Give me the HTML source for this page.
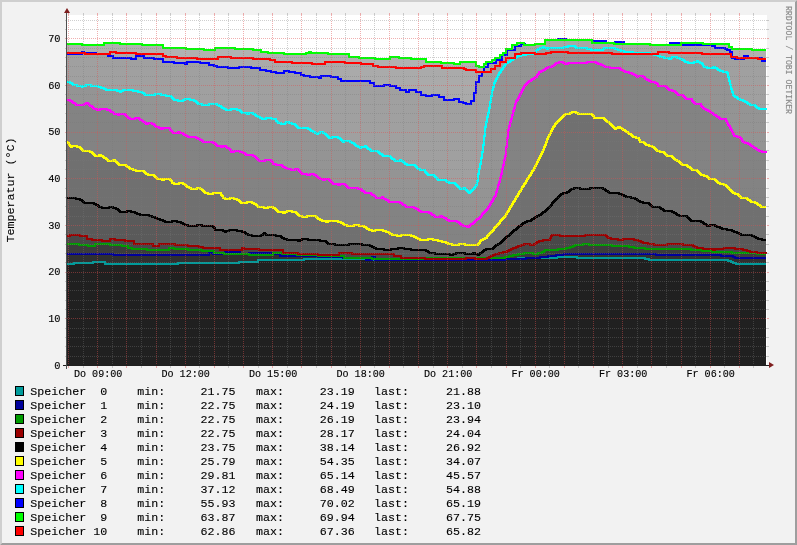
<!DOCTYPE html><html><head><meta charset="utf-8"><style>html,body{margin:0;padding:0;background:#f2f2f2;}svg{display:block;will-change:transform;}text{font-family:"Liberation Mono",monospace;stroke:#000;stroke-width:0.12px;}</style></head><body>
<svg width="797" height="545" viewBox="0 0 797 545">
<rect x="0" y="0" width="797" height="545" fill="#f2f2f2"/>
<polygon points="0,0 797,0 795,2 2,2 2,543 0,545" fill="#cfcfcf"/>
<polygon points="797,0 797,545 0,545 2,543 795,543 795,2" fill="#9e9e9e"/>
<rect x="67" y="15" width="700" height="350" fill="#ffffff"/>
<polygon points="67,365 67,44 82,44 82,45 104,45 104,43 120,43 120,44 142,44 142,45 163,45 163,48 186,48 186,49 204,49 204,50 215,50 215,48 235,48 235,49 253,49 253,50 261,50 261,52 268,52 268,53 284,53 284,54 306,54 306,53 309,53 309,52 311,52 311,53 328,53 328,54 349,54 349,57 359,57 359,58 375,58 375,59 390,59 390,57 399,57 399,58 411,58 411,59 426,59 426,62 441,62 441,63 454,63 454,64 460,64 460,62 476,62 476,66 479,66 479,67 484,67 484,64 486,64 486,62 492,62 492,60 495,60 495,58 500,58 500,55 503,55 503,53 506,53 506,49 512,49 512,45 517,45 517,43 524,43 524,45 535,45 535,44 545,44 545,40 592,40 592,43 614,43 614,44 650,44 650,45 681,45 681,43 703,43 703,44 729,44 729,47 732,47 732,49 752,49 752,50 766,50 766,365" fill="#000" fill-opacity="0.306"/>
<polygon points="67,365 67,53 85,53 85,54 110,54 110,52 116,52 116,53 136,53 136,54 163,54 163,56 166,56 166,57 177,57 177,58 197,58 197,59 218,59 218,57 231,57 231,58 253,58 253,59 270,59 270,60 275,60 275,62 292,62 292,63 312,63 312,64 325,64 325,62 345,62 345,63 361,63 361,64 373,64 373,66 378,66 378,67 396,67 396,68 421,68 421,67 424,67 424,66 442,66 442,68 464,68 464,69 466,69 466,70 476,70 476,72 491,72 491,69 495,69 495,66 500,66 500,62 506,62 506,58 515,58 515,54 521,54 521,53 535,53 535,54 546,54 546,53 551,53 551,52 568,52 568,53 612,53 612,54 658,54 658,52 669,52 669,53 702,53 702,54 731,54 731,57 737,57 737,58 758,58 758,59 766,59 766,365" fill="#000" fill-opacity="0.034"/>
<polygon points="67,365 67,54 82,54 82,52 84,52 84,53 96,53 96,54 108,54 108,56 113,56 113,58 131,58 131,59 136,59 136,56 144,56 144,58 154,58 154,59 163,59 163,62 174,62 174,63 185,63 185,64 187,64 187,62 200,62 200,63 209,63 209,65 214,65 214,66 217,66 217,67 228,67 228,68 239,68 239,67 251,67 251,68 260,68 260,70 266,70 266,71 271,71 271,72 276,72 276,73 284,73 284,71 289,71 289,72 295,72 295,73 301,73 301,75 304,75 304,76 310,76 310,77 319,77 319,78 321,78 321,76 331,76 331,77 338,77 338,79 341,79 341,81 370,81 370,83 374,83 374,86 384,86 384,85 390,85 390,86 396,86 396,88 400,88 400,90 406,90 406,92 409,92 409,90 416,90 416,92 421,92 421,95 426,95 426,96 432,96 432,95 439,95 439,97 444,97 444,100 454,100 454,99 459,99 459,102 463,102 463,103 466,103 466,104 471,104 471,101 474,101 474,93 476,93 476,82 479,82 479,76 482,76 482,72 484,72 484,67 488,67 488,63 496,63 496,60 502,60 502,55 507,55 507,50 515,50 515,46 521,46 521,44 525,44 525,45 535,45 535,44 545,44 545,40 558,40 558,39 566,39 566,40 592,40 592,41 606,41 606,43 615,43 615,42 624,42 624,44 650,44 650,45 670,45 670,43 680,43 680,45 712,45 712,46 715,46 715,48 725,48 725,49 727,49 727,50 730,50 730,52 732,52 732,58 735,58 735,59 744,59 744,56 748,56 748,58 762,58 762,61 766,61 766,365" fill="#000" fill-opacity="0.053"/>
<polygon points="67,365 67,82 68,82 69,82 70,82 70,83 71,83 72,83 72,84 73,84 73,85 74,85 75,85 76,85 77,85 77,86 78,86 79,86 80,86 81,86 82,86 82,87 83,87 83,86 84,86 85,86 86,86 86,85 87,85 88,85 89,85 90,85 91,85 91,86 92,86 93,86 94,86 95,86 96,86 97,86 98,86 98,87 99,87 100,87 101,87 101,88 102,88 103,88 104,88 104,89 105,89 106,89 106,90 107,90 108,90 109,90 110,90 111,90 112,90 113,90 114,90 115,90 116,90 117,90 117,91 118,91 119,91 120,91 120,92 121,92 121,91 122,91 123,91 123,90 124,90 125,90 126,90 127,90 128,90 129,90 130,90 131,90 132,90 133,90 133,91 134,91 135,91 136,91 137,91 138,91 138,92 139,92 140,92 141,92 142,92 142,93 143,93 144,93 144,94 145,94 145,95 146,95 147,95 148,95 149,95 150,95 151,95 152,95 153,95 154,95 155,95 155,94 156,94 157,94 158,94 159,94 160,94 161,94 161,95 162,95 163,95 164,95 165,95 166,95 166,96 167,96 168,96 169,96 170,96 171,96 171,97 172,97 172,98 173,98 173,99 174,99 174,100 175,100 176,100 177,100 178,100 178,101 179,101 180,101 181,101 182,101 183,101 183,100 184,100 185,100 185,99 186,99 187,99 188,99 189,99 190,99 190,100 191,100 192,100 193,100 194,100 194,101 195,101 196,101 196,102 197,102 197,103 198,103 198,104 199,104 200,104 201,104 202,104 202,105 203,105 204,105 205,105 206,105 207,105 208,105 209,105 209,104 210,104 211,104 212,104 213,104 214,104 215,104 216,104 217,104 217,105 218,105 219,105 219,106 220,106 221,106 221,107 222,107 222,108 223,108 224,108 224,109 225,109 226,109 226,110 227,110 228,110 229,110 230,110 231,110 231,109 232,109 233,109 234,109 235,109 236,109 237,109 237,110 238,110 239,110 240,110 240,111 241,111 241,112 242,112 242,113 243,113 244,113 245,113 246,113 247,113 247,114 248,114 249,114 249,113 250,113 251,113 252,113 253,113 253,114 254,114 255,114 255,115 256,115 256,116 257,116 258,116 258,117 259,117 260,117 260,118 261,118 262,118 262,119 263,119 264,119 265,119 266,119 266,118 267,118 268,118 269,118 270,118 271,118 272,118 272,119 273,119 274,119 275,119 276,119 276,121 277,121 277,122 278,122 278,123 279,123 280,123 281,123 281,124 282,124 283,124 284,124 285,124 285,123 286,123 286,122 287,122 288,122 289,122 289,123 290,123 291,123 292,123 292,124 293,124 294,124 295,124 295,125 296,125 296,126 297,126 297,127 298,127 298,128 299,128 300,128 301,128 302,128 303,128 304,128 305,128 306,128 307,128 308,128 308,129 309,129 310,129 310,130 311,130 311,131 312,131 313,131 313,132 314,132 315,132 315,133 316,133 317,133 317,134 318,134 318,133 319,133 320,133 320,132 321,132 322,132 323,132 323,133 324,133 325,133 325,134 326,134 326,135 327,135 327,136 328,136 328,137 329,137 329,138 330,138 331,138 332,138 332,137 333,137 334,137 335,137 336,137 337,137 338,137 338,138 339,138 340,138 340,139 341,139 341,140 342,140 342,141 343,141 343,142 344,142 344,141 345,141 346,141 347,141 348,141 349,141 350,141 350,142 351,142 352,142 352,143 353,143 354,143 354,144 355,144 355,145 356,145 356,146 357,146 358,146 358,147 359,147 360,147 360,148 361,148 361,147 362,147 363,147 364,147 365,147 365,146 366,146 366,147 367,147 367,148 368,148 368,149 369,149 370,149 370,150 371,150 371,151 372,151 373,151 374,151 375,151 376,151 377,151 378,151 378,152 379,152 379,153 380,153 380,154 381,154 382,154 382,155 383,155 383,156 384,156 385,156 386,156 387,156 388,156 389,156 390,156 390,157 391,157 391,158 392,158 392,159 393,159 394,159 394,160 395,160 395,161 396,161 397,161 398,161 399,161 400,161 400,160 401,160 401,161 402,161 403,161 403,162 404,162 404,163 405,163 405,164 406,164 407,164 407,165 408,165 409,165 410,165 411,165 412,165 413,165 414,165 415,165 415,166 416,166 416,167 417,167 417,168 418,168 418,169 419,169 420,169 420,170 421,170 422,170 423,170 424,170 425,170 425,172 426,172 426,173 427,173 427,174 428,174 428,175 429,175 430,175 431,175 432,175 433,175 434,175 434,176 435,176 435,177 436,177 436,178 437,178 437,179 438,179 438,180 439,180 440,180 441,180 442,180 443,180 444,180 445,180 446,180 446,181 447,181 447,182 448,182 449,182 449,183 450,183 451,183 452,183 453,183 454,183 455,183 455,184 456,184 456,185 457,185 457,186 458,186 458,187 459,187 459,188 460,188 460,189 461,189 462,189 463,189 463,188 464,188 465,188 465,189 466,189 466,190 467,190 467,191 468,191 468,192 469,192 469,193 470,193 470,192 471,192 471,191 472,191 472,190 473,190 473,189 474,189 474,188 475,188 475,187 476,187 476,185 477,185 477,181 478,181 478,174 479,174 479,169 480,169 480,164 481,164 481,158 482,158 482,152 483,152 483,145 484,145 484,136 485,136 485,127 486,127 486,122 487,122 487,117 488,117 488,113 489,113 489,108 490,108 490,102 491,102 491,96 492,96 492,90 493,90 493,87 494,87 494,83 495,83 495,81 496,81 496,79 497,79 497,77 498,77 498,75 499,75 499,73 500,73 500,72 501,72 501,70 502,70 502,69 503,69 503,67 504,67 504,66 505,66 505,65 506,65 506,63 507,63 508,63 508,62 509,62 510,62 510,61 511,61 511,60 512,60 513,60 513,59 514,59 514,58 515,58 516,58 516,57 517,57 518,57 518,56 519,56 520,56 521,56 521,55 522,55 523,55 524,55 525,55 526,55 526,54 527,54 528,54 529,54 530,54 531,54 532,54 533,54 534,54 535,54 536,54 536,50 537,50 538,50 538,49 539,49 540,49 540,48 541,48 542,48 543,48 543,47 544,47 544,48 545,48 546,48 547,48 547,49 548,49 548,48 549,48 550,48 551,48 552,48 553,48 554,48 555,48 556,48 557,48 558,48 559,48 560,48 561,48 562,48 563,48 564,48 564,47 565,47 566,47 567,47 568,47 568,46 569,46 570,46 571,46 572,46 573,46 574,46 575,46 575,47 576,47 576,48 577,48 578,48 579,48 580,48 581,48 582,48 583,48 584,48 585,48 586,48 587,48 587,49 588,49 589,49 590,49 591,49 591,50 592,50 593,50 594,50 595,50 596,50 597,50 598,50 599,50 600,50 601,50 602,50 603,50 603,49 604,49 604,48 605,48 606,48 607,48 608,48 609,48 610,48 611,48 612,48 613,48 614,48 615,48 615,49 616,49 617,49 618,49 618,50 619,50 620,50 621,50 621,51 622,51 623,51 624,51 624,52 625,52 626,52 627,52 628,52 629,52 630,52 631,52 632,52 633,52 633,53 634,53 635,53 636,53 637,53 638,53 639,53 640,53 641,53 642,53 643,53 644,53 645,53 646,53 647,53 648,53 649,53 650,53 650,54 651,54 652,54 653,54 654,54 654,55 655,55 656,55 657,55 658,55 658,56 659,56 660,56 660,57 661,57 662,57 663,57 664,57 664,58 665,58 666,58 667,58 668,58 669,58 669,59 670,59 671,59 671,58 672,58 672,57 673,57 674,57 675,57 676,57 677,57 677,58 678,58 679,58 680,58 680,59 681,59 682,59 682,60 683,60 684,60 684,61 685,61 685,62 686,62 687,62 688,62 688,63 689,63 690,63 691,63 692,63 693,63 694,63 694,62 695,62 696,62 697,62 697,61 698,61 698,62 699,62 700,62 700,63 701,63 702,63 702,64 703,64 703,66 704,66 704,67 705,67 706,67 707,67 707,68 708,68 709,68 710,68 711,68 712,68 713,68 713,67 714,67 715,67 715,68 716,68 717,68 717,69 718,69 718,70 719,70 720,70 720,71 721,71 722,71 723,71 723,72 724,72 725,72 726,72 727,72 727,73 728,73 728,77 729,77 729,81 730,81 730,85 731,85 731,89 732,89 732,92 733,92 733,95 734,95 734,96 735,96 735,97 736,97 737,97 737,98 738,98 738,99 739,99 740,99 740,100 741,100 742,100 743,100 743,101 744,101 745,101 745,102 746,102 747,102 747,103 748,103 748,104 749,104 750,104 750,105 751,105 752,105 753,105 754,105 755,105 755,106 756,106 756,107 757,107 757,108 758,108 759,108 759,109 760,109 761,109 762,109 763,109 764,109 765,109 766,109 766,110 766,110 766,365" fill="#000" fill-opacity="0.074"/>
<polygon points="67,365 67,100 68,100 69,100 70,100 70,101 71,101 72,101 72,102 73,102 73,103 74,103 75,103 75,104 76,104 76,105 77,105 78,105 79,105 80,105 81,105 82,105 83,105 84,105 84,104 85,104 86,104 86,103 87,103 88,103 88,104 89,104 89,105 90,105 90,106 91,106 92,106 92,107 93,107 93,108 94,108 94,109 95,109 96,109 97,109 97,110 98,110 99,110 100,110 100,109 101,109 102,109 103,109 104,109 105,109 106,109 107,109 107,110 108,110 109,110 110,110 110,111 111,111 111,112 112,112 113,112 113,113 114,113 114,114 115,114 116,114 117,114 118,114 118,115 119,115 119,114 120,114 121,114 122,114 123,114 124,114 125,114 125,115 126,115 126,116 127,116 127,117 128,117 128,118 129,118 130,118 130,119 131,119 132,119 133,119 134,119 135,119 135,118 136,118 137,118 138,118 139,118 139,119 140,119 140,120 141,120 142,120 142,121 143,121 143,122 144,122 145,122 145,123 146,123 146,124 147,124 148,124 148,123 149,123 150,123 151,123 152,123 152,124 153,124 154,124 154,125 155,125 155,126 156,126 156,127 157,127 158,127 159,127 159,128 160,128 161,128 161,129 162,129 163,129 163,128 164,128 165,128 166,128 167,128 168,128 169,128 170,128 170,130 171,130 171,131 172,131 172,132 173,132 173,133 174,133 175,133 176,133 177,133 178,133 178,132 179,132 180,132 180,133 181,133 182,133 183,133 183,134 184,134 184,135 185,135 186,135 186,136 187,136 188,136 188,137 189,137 190,137 191,137 192,137 193,137 194,137 195,137 196,137 196,138 197,138 198,138 198,139 199,139 200,139 200,140 201,140 202,140 202,141 203,141 203,142 204,142 205,142 206,142 207,142 208,142 209,142 210,142 211,142 212,142 213,142 213,143 214,143 215,143 215,144 216,144 216,145 217,145 217,146 218,146 219,146 220,146 221,146 221,147 222,147 223,147 223,146 224,146 225,146 226,146 226,147 227,147 227,148 228,148 229,148 229,149 230,149 230,150 231,150 231,152 232,152 233,152 234,152 234,151 235,151 236,151 237,151 238,151 239,151 240,151 240,152 241,152 242,152 243,152 243,153 244,153 245,153 245,154 246,154 246,155 247,155 248,155 249,155 250,155 251,155 252,155 253,155 253,156 254,156 255,156 255,157 256,157 256,158 257,158 257,159 258,159 258,160 259,160 259,161 260,161 261,161 262,161 263,161 264,161 265,161 265,160 266,160 267,160 268,160 269,160 270,160 271,160 271,161 272,161 272,162 273,162 273,164 274,164 275,164 276,164 276,165 277,165 278,165 279,165 280,165 281,165 282,165 282,166 283,166 283,167 284,167 285,167 285,168 286,168 287,168 287,169 288,169 289,169 290,169 291,169 291,170 292,170 293,170 294,170 295,170 295,169 296,169 297,169 298,169 298,170 299,170 299,171 300,171 300,172 301,172 301,173 302,173 302,174 303,174 304,174 305,174 306,174 307,174 307,175 308,175 309,175 310,175 310,174 311,174 312,174 313,174 314,174 314,175 315,175 316,175 316,176 317,176 317,177 318,177 318,178 319,178 320,178 320,179 321,179 322,179 323,179 323,180 324,180 325,180 325,179 326,179 327,179 328,179 329,179 329,180 330,180 330,181 331,181 331,182 332,182 332,183 333,183 333,184 334,184 335,184 336,184 337,184 338,184 338,185 339,185 340,185 340,184 341,184 342,184 343,184 344,184 345,184 345,185 346,185 346,186 347,186 347,187 348,187 348,188 349,188 350,188 351,188 352,188 353,188 354,188 355,188 356,188 357,188 358,188 358,189 359,189 360,189 361,189 361,190 362,190 362,191 363,191 364,191 364,192 365,192 365,193 366,193 367,193 368,193 369,193 370,193 371,193 371,194 372,194 372,195 373,195 374,195 374,196 375,196 375,197 376,197 376,198 377,198 378,198 379,198 380,198 381,198 382,198 382,197 383,197 383,198 384,198 384,199 385,199 386,199 386,200 387,200 388,200 388,201 389,201 389,202 390,202 391,202 392,202 393,202 394,202 395,202 396,202 397,202 398,202 399,202 400,202 400,203 401,203 402,203 402,204 403,204 403,205 404,205 405,205 405,206 406,206 406,207 407,207 408,207 409,207 410,207 411,207 412,207 413,207 414,207 414,208 415,208 416,208 416,209 417,209 418,209 418,210 419,210 419,211 420,211 421,211 421,212 422,212 423,212 424,212 425,212 426,212 427,212 428,212 429,212 429,213 430,213 431,213 431,214 432,214 432,215 433,215 434,215 434,216 435,216 435,217 436,217 437,217 438,217 439,217 440,217 440,216 441,216 442,216 442,217 443,217 444,217 444,218 445,218 446,218 446,219 447,219 447,220 448,220 449,220 449,221 450,221 451,221 452,221 453,221 454,221 455,221 456,221 457,221 457,222 458,222 459,222 459,223 460,223 460,224 461,224 461,225 462,225 463,225 463,226 464,226 465,226 466,226 467,226 467,227 468,227 469,227 469,226 470,226 470,225 471,225 471,224 472,224 473,224 473,223 474,223 474,222 475,222 475,221 476,221 476,220 477,220 477,219 478,219 479,219 479,218 480,218 480,217 481,217 481,216 482,216 482,214 483,214 483,213 484,213 484,212 485,212 485,211 486,211 486,210 487,210 487,209 488,209 488,207 489,207 489,206 490,206 490,204 491,204 491,202 492,202 492,201 493,201 493,199 494,199 494,197 495,197 495,196 496,196 496,192 497,192 497,189 498,189 498,185 499,185 499,182 500,182 500,178 501,178 501,174 502,174 502,169 503,169 503,165 504,165 504,160 505,160 505,156 506,156 506,147 507,147 507,138 508,138 508,130 509,130 509,126 510,126 510,122 511,122 511,119 512,119 512,115 513,115 513,111 514,111 514,108 515,108 515,104 516,104 516,101 517,101 517,100 518,100 518,98 519,98 519,96 520,96 520,94 521,94 521,92 522,92 522,90 523,90 523,88 524,88 524,86 525,86 525,85 526,85 526,84 527,84 527,83 528,83 528,82 529,82 529,81 530,81 531,81 531,80 532,80 532,79 533,79 534,79 534,78 535,78 535,77 536,77 537,77 537,75 538,75 538,74 539,74 539,72 540,72 541,72 541,71 542,71 543,71 543,70 544,70 545,70 545,69 546,69 546,68 547,68 548,68 548,67 549,67 550,67 551,67 552,67 552,66 553,66 554,66 554,65 555,65 555,64 556,64 556,63 557,63 558,63 559,63 559,62 560,62 561,62 562,62 563,62 563,63 564,63 565,63 565,64 566,64 567,64 568,64 568,63 569,63 570,63 571,63 572,63 573,63 574,63 575,63 576,63 577,63 578,63 579,63 580,63 581,63 582,63 583,63 584,63 585,63 586,63 587,63 587,62 588,62 589,62 590,62 591,62 592,62 593,62 594,62 595,62 596,62 596,63 597,63 598,63 598,64 599,64 600,64 601,64 601,65 602,65 603,65 603,66 604,66 605,66 605,67 606,67 607,67 608,67 609,67 610,67 610,68 611,68 612,68 613,68 614,68 615,68 616,68 617,68 618,68 619,68 620,68 620,69 621,69 621,70 622,70 623,70 623,71 624,71 625,71 625,72 626,72 627,72 628,72 629,72 629,73 630,73 631,73 632,73 632,74 633,74 634,74 634,75 635,75 636,75 636,76 637,76 637,77 638,77 638,76 639,76 640,76 641,76 642,76 643,76 643,77 644,77 645,77 645,79 646,79 647,79 647,80 648,80 649,80 649,81 650,81 651,81 651,82 652,82 653,82 654,82 655,82 655,83 656,83 657,83 657,84 658,84 658,86 659,86 660,86 661,86 662,86 663,86 664,86 665,86 666,86 666,87 667,87 667,88 668,88 668,89 669,89 669,90 670,90 671,90 672,90 672,91 673,91 674,91 675,91 675,92 676,92 676,93 677,93 677,94 678,94 678,95 679,95 680,95 681,95 682,95 683,95 683,96 684,96 684,97 685,97 685,98 686,98 686,99 687,99 688,99 689,99 690,99 691,99 692,99 692,101 693,101 693,102 694,102 694,103 695,103 695,104 696,104 697,104 698,104 699,104 700,104 701,104 701,106 702,106 702,107 703,107 703,108 704,108 704,109 705,109 706,109 706,110 707,110 708,110 708,111 709,111 710,111 710,112 711,112 711,113 712,113 713,113 713,114 714,114 714,115 715,115 716,115 716,116 717,116 717,117 718,117 719,117 719,118 720,118 720,119 721,119 722,119 723,119 724,119 725,119 726,119 726,121 727,121 727,123 728,123 728,125 729,125 729,126 730,126 730,128 731,128 731,130 732,130 732,132 733,132 733,134 734,134 734,136 735,136 736,136 737,136 737,137 738,137 739,137 740,137 740,138 741,138 741,139 742,139 742,141 743,141 743,142 744,142 745,142 745,143 746,143 747,143 748,143 748,144 749,144 750,144 750,145 751,145 751,146 752,146 753,146 753,147 754,147 754,148 755,148 756,148 756,149 757,149 757,150 758,150 759,150 759,151 760,151 761,151 762,151 762,152 763,152 764,152 765,152 766,152 766,153 766,153 766,365" fill="#000" fill-opacity="0.113"/>
<polygon points="67,365 67,142 68,142 68,143 69,143 69,145 70,145 70,146 71,146 71,147 72,147 72,146 73,146 74,146 75,146 76,146 77,146 77,147 78,147 79,147 80,147 80,148 81,148 81,149 82,149 82,150 83,150 83,151 84,151 85,151 86,151 87,151 88,151 89,151 90,151 90,152 91,152 92,152 92,153 93,153 93,154 94,154 94,155 95,155 95,156 96,156 97,156 98,156 99,156 99,155 100,155 101,155 101,156 102,156 103,156 103,157 104,157 104,158 105,158 106,158 106,159 107,159 107,160 108,160 108,161 109,161 110,161 111,161 112,161 113,161 113,160 114,160 115,160 115,161 116,161 116,162 117,162 117,163 118,163 118,164 119,164 119,165 120,165 121,165 122,165 123,165 124,165 125,165 126,165 126,166 127,166 127,167 128,167 129,167 129,168 130,168 130,169 131,169 132,169 133,169 133,170 134,170 135,170 136,170 136,171 137,171 138,171 139,171 140,171 141,171 142,171 143,171 144,171 144,172 145,172 145,173 146,173 146,174 147,174 148,174 148,175 149,175 150,175 151,175 152,175 153,175 154,175 154,176 155,176 155,177 156,177 156,178 157,178 157,179 158,179 159,179 160,179 161,179 162,179 162,180 163,180 164,180 164,179 165,179 166,179 167,179 168,179 169,179 170,179 170,180 171,180 171,181 172,181 172,183 173,183 174,183 174,184 175,184 176,184 177,184 178,184 179,184 179,183 180,183 181,183 182,183 183,183 183,184 184,184 185,184 185,185 186,185 186,186 187,186 187,187 188,187 189,187 189,188 190,188 191,188 191,189 192,189 193,189 194,189 195,189 196,189 197,189 197,188 198,188 199,188 200,188 200,189 201,189 202,189 202,190 203,190 203,191 204,191 204,192 205,192 205,193 206,193 207,193 208,193 208,194 209,194 210,194 211,194 212,194 213,194 213,193 214,193 215,193 216,193 217,193 218,193 219,193 220,193 221,193 221,195 222,195 222,196 223,196 223,198 224,198 225,198 225,199 226,199 227,199 228,199 229,199 230,199 230,198 231,198 232,198 233,198 234,198 234,199 235,199 236,199 237,199 237,200 238,200 239,200 239,201 240,201 240,202 241,202 241,203 242,203 243,203 244,203 245,203 246,203 247,203 247,202 248,202 249,202 250,202 251,202 252,202 252,203 253,203 254,203 254,204 255,204 256,204 256,205 257,205 257,206 258,206 258,207 259,207 260,207 261,207 262,207 263,207 264,207 264,208 265,208 266,208 267,208 268,208 268,207 269,207 270,207 271,207 272,207 273,207 273,208 274,208 275,208 275,209 276,209 276,210 277,210 277,211 278,211 278,212 279,212 280,212 281,212 282,212 283,212 283,213 284,213 285,213 285,212 286,212 287,212 287,211 288,211 289,211 290,211 291,211 292,211 292,212 293,212 294,212 295,212 296,212 296,213 297,213 297,214 298,214 298,215 299,215 299,216 300,216 301,216 302,216 302,217 303,217 304,217 305,217 306,217 307,217 307,216 308,216 309,216 310,216 311,216 312,216 313,216 314,216 315,216 316,216 316,217 317,217 317,218 318,218 318,219 319,219 320,219 320,220 321,220 322,220 322,221 323,221 324,221 325,221 326,221 326,222 327,222 328,222 328,221 329,221 330,221 331,221 332,221 333,221 334,221 335,221 336,221 337,221 338,221 338,222 339,222 340,222 341,222 341,223 342,223 343,223 343,224 344,224 344,225 345,225 346,225 347,225 347,226 348,226 349,226 350,226 351,226 352,226 353,226 354,226 354,225 355,225 356,225 357,225 358,225 359,225 359,226 360,226 361,226 362,226 363,226 364,226 364,227 365,227 366,227 366,228 367,228 367,229 368,229 369,229 369,230 370,230 371,230 372,230 372,231 373,231 374,231 375,231 375,230 376,230 377,230 378,230 379,230 380,230 381,230 382,230 383,230 383,231 384,231 385,231 386,231 386,232 387,232 388,232 389,232 389,233 390,233 390,234 391,234 392,234 392,235 393,235 394,235 395,235 396,235 397,235 397,236 398,236 399,236 400,236 401,236 401,235 402,235 403,235 404,235 405,235 406,235 407,235 408,235 409,235 410,235 411,235 411,236 412,236 413,236 414,236 414,237 415,237 416,237 416,238 417,238 418,238 418,239 419,239 420,239 420,240 421,240 422,240 423,240 424,240 425,240 426,240 427,240 428,240 428,239 429,239 430,239 431,239 432,239 433,239 433,240 434,240 435,240 436,240 437,240 438,240 438,241 439,241 440,241 441,241 442,241 442,242 443,242 444,242 445,242 446,242 446,243 447,243 448,243 448,244 449,244 450,244 451,244 452,244 452,245 453,245 454,245 455,245 456,245 457,245 458,245 459,245 459,244 460,244 461,244 462,244 463,244 464,244 465,244 465,245 466,245 467,245 468,245 469,245 470,245 471,245 472,245 473,245 474,245 475,245 476,245 477,245 478,245 478,244 479,244 479,243 480,243 480,241 481,241 481,240 482,240 483,240 483,239 484,239 485,239 485,238 486,238 487,238 487,236 488,236 488,235 489,235 489,234 490,234 490,233 491,233 491,232 492,232 492,231 493,231 493,230 494,230 494,228 495,228 495,227 496,227 496,226 497,226 497,225 498,225 498,224 499,224 499,223 500,223 500,221 501,221 501,220 502,220 502,219 503,219 503,218 504,218 504,217 505,217 505,216 506,216 506,214 507,214 507,212 508,212 508,211 509,211 509,209 510,209 510,207 511,207 511,206 512,206 512,204 513,204 513,202 514,202 514,201 515,201 515,199 516,199 516,197 517,197 517,196 518,196 518,194 519,194 519,192 520,192 520,191 521,191 521,189 522,189 522,187 523,187 523,186 524,186 524,184 525,184 525,183 526,183 526,181 527,181 527,179 528,179 528,178 529,178 529,176 530,176 530,175 531,175 531,173 532,173 532,171 533,171 533,170 534,170 534,168 535,168 535,166 536,166 536,164 537,164 537,162 538,162 538,160 539,160 539,158 540,158 540,156 541,156 541,154 542,154 542,152 543,152 543,150 544,150 544,147 545,147 545,145 546,145 546,142 547,142 547,139 548,139 548,137 549,137 549,135 550,135 550,133 551,133 551,131 552,131 552,129 553,129 553,127 554,127 554,126 555,126 555,124 556,124 556,123 557,123 557,122 558,122 558,121 559,121 559,120 560,120 560,119 561,119 561,118 562,118 562,117 563,117 563,116 564,116 564,115 565,115 565,114 566,114 567,114 568,114 569,114 570,114 570,113 571,113 572,113 572,112 573,112 574,112 575,112 576,112 576,113 577,113 578,113 578,114 579,114 580,114 581,114 582,114 583,114 584,114 585,114 586,114 587,114 588,114 589,114 590,114 591,114 592,114 592,115 593,115 593,116 594,116 594,118 595,118 596,118 597,118 598,118 599,118 600,118 601,118 602,118 603,118 604,118 604,119 605,119 605,120 606,120 606,121 607,121 607,122 608,122 609,122 609,123 610,123 610,124 611,124 611,125 612,125 612,126 613,126 613,127 614,127 614,128 615,128 615,129 616,129 616,128 617,128 618,128 618,127 619,127 620,127 620,128 621,128 622,128 622,129 623,129 623,130 624,130 625,130 625,131 626,131 626,132 627,132 628,132 628,133 629,133 629,134 630,134 631,134 631,135 632,135 632,136 633,136 633,137 634,137 635,137 636,137 636,138 637,138 638,138 639,138 639,140 640,140 640,142 641,142 642,142 643,142 644,142 644,143 645,143 645,144 646,144 646,145 647,145 648,145 649,145 649,146 650,146 651,146 652,146 652,147 653,147 654,147 654,148 655,148 655,149 656,149 656,150 657,150 657,151 658,151 659,151 660,151 660,152 661,152 662,152 663,152 664,152 664,153 665,153 665,154 666,154 666,155 667,155 667,156 668,156 669,156 670,156 671,156 672,156 672,157 673,157 673,158 674,158 674,159 675,159 675,160 676,160 677,160 677,161 678,161 679,161 679,162 680,162 680,163 681,163 681,164 682,164 682,165 683,165 684,165 685,165 686,165 687,165 687,166 688,166 688,167 689,167 690,167 690,168 691,168 691,169 692,169 692,170 693,170 694,170 695,170 696,170 697,170 697,171 698,171 698,172 699,172 699,173 700,173 700,174 701,174 701,175 702,175 703,175 704,175 704,176 705,176 706,176 707,176 707,177 708,177 708,178 709,178 709,179 710,179 711,179 712,179 713,179 714,179 715,179 715,180 716,180 716,181 717,181 717,182 718,182 718,183 719,183 720,183 720,184 721,184 722,184 723,184 724,184 724,185 725,185 726,185 726,186 727,186 727,187 728,187 728,188 729,188 729,189 730,189 730,190 731,190 731,191 732,191 732,192 733,192 733,193 734,193 735,193 735,194 736,194 737,194 738,194 738,195 739,195 739,196 740,196 740,197 741,197 741,198 742,198 743,198 744,198 745,198 746,198 747,198 747,199 748,199 748,200 749,200 750,200 750,201 751,201 751,202 752,202 753,202 754,202 755,202 755,203 756,203 757,203 757,204 758,204 758,205 759,205 760,205 760,206 761,206 761,207 762,207 763,207 764,207 765,207 766,207 766,207 766,365" fill="#000" fill-opacity="0.143"/>
<polygon points="67,365 67,198 68,198 69,198 70,198 71,198 72,198 73,198 74,198 75,198 76,198 76,199 77,199 78,199 79,199 80,199 80,200 81,200 82,200 82,201 83,201 83,202 84,202 84,203 85,203 86,203 87,203 88,203 89,203 90,203 91,203 92,203 93,203 94,203 94,204 95,204 96,204 96,205 97,205 98,205 98,206 99,206 99,207 100,207 101,207 102,207 102,208 103,208 104,208 105,208 106,208 107,208 108,208 109,208 109,207 110,207 111,207 112,207 113,207 113,208 114,208 115,208 116,208 116,209 117,209 118,209 118,210 119,210 119,211 120,211 120,212 121,212 122,212 123,212 124,212 125,212 126,212 127,212 127,211 128,211 129,211 130,211 131,211 131,212 132,212 133,212 134,212 135,212 135,213 136,213 137,213 137,214 138,214 139,214 140,214 140,215 141,215 142,215 143,215 144,215 145,215 146,215 147,215 148,215 149,215 149,216 150,216 151,216 152,216 152,217 153,217 154,217 155,217 155,218 156,218 157,218 157,219 158,219 159,219 160,219 160,220 161,220 162,220 163,220 163,221 164,221 165,221 165,222 166,222 167,222 168,222 169,222 170,222 171,222 172,222 172,221 173,221 174,221 175,221 176,221 177,221 177,222 178,222 179,222 180,222 181,222 181,223 182,223 183,223 183,224 184,224 185,224 185,225 186,225 187,225 188,225 188,226 189,226 190,226 191,226 192,226 193,226 194,226 195,226 196,226 197,226 197,225 198,225 199,225 200,225 201,225 202,225 202,226 203,226 204,226 205,226 206,226 207,226 208,226 209,226 210,226 211,226 212,226 213,226 213,227 214,227 214,228 215,228 215,230 216,230 217,230 218,230 219,230 220,230 221,230 222,230 223,230 223,231 224,231 225,231 225,232 226,232 226,231 227,231 228,231 229,231 229,230 230,230 231,230 232,230 233,230 234,230 235,230 236,230 237,230 237,231 238,231 239,231 240,231 241,231 242,231 242,232 243,232 244,232 245,232 245,233 246,233 246,234 247,234 248,234 248,235 249,235 250,235 251,235 252,235 252,236 253,236 254,236 255,236 256,236 257,236 258,236 259,236 260,236 261,236 261,235 262,235 263,235 263,234 264,234 264,233 265,233 265,234 266,234 266,235 267,235 268,235 269,235 270,235 271,235 272,235 273,235 274,235 275,235 276,235 276,236 277,236 278,236 279,236 280,236 281,236 281,237 282,237 282,238 283,238 284,238 284,239 285,239 286,239 287,239 287,240 288,240 289,240 290,240 291,240 292,240 293,240 294,240 295,240 296,240 297,240 298,240 298,241 299,241 300,241 300,240 301,240 302,240 302,239 303,239 304,239 305,239 306,239 307,239 308,239 308,240 309,240 310,240 311,240 312,240 313,240 314,240 315,240 316,240 317,240 318,240 319,240 320,240 320,241 321,241 322,241 323,241 324,241 325,241 326,241 326,242 327,242 327,243 328,243 328,244 329,244 330,244 331,244 332,244 333,244 334,244 335,244 335,245 336,245 337,245 338,245 339,245 340,245 341,245 342,245 343,245 344,245 345,245 346,245 347,245 348,245 349,245 349,244 350,244 351,244 352,244 353,244 354,244 355,244 356,244 357,244 358,244 359,244 360,244 361,244 362,244 362,245 363,245 364,245 365,245 366,245 367,245 368,245 369,245 370,245 370,246 371,246 372,246 372,247 373,247 374,247 374,248 375,248 376,248 376,249 377,249 378,249 379,249 380,249 381,249 382,249 383,249 384,249 384,250 385,250 386,250 387,250 388,250 389,250 390,250 391,250 391,249 392,249 393,249 394,249 395,249 396,249 397,249 398,249 398,248 399,248 400,248 401,248 402,248 403,248 404,248 404,249 405,249 406,249 407,249 408,249 409,249 410,249 411,249 411,250 412,250 413,250 414,250 415,250 416,250 417,250 418,250 419,250 420,250 421,250 422,250 423,250 424,250 425,250 426,250 426,251 427,251 428,251 428,252 429,252 429,253 430,253 431,253 432,253 433,253 434,253 435,253 435,254 436,254 437,254 438,254 439,254 440,254 441,254 442,254 443,254 444,254 445,254 446,254 447,254 448,254 449,254 450,254 450,255 451,255 452,255 453,255 453,254 454,254 455,254 456,254 456,253 457,253 458,253 459,253 460,253 461,253 462,253 463,253 464,253 465,253 465,254 466,254 467,254 468,254 469,254 470,254 471,254 472,254 473,254 473,253 474,253 475,253 475,254 476,254 477,254 477,255 478,255 479,255 479,254 480,254 480,253 481,253 482,253 482,252 483,252 483,251 484,251 484,250 485,250 486,250 486,249 487,249 488,249 489,249 490,249 491,249 492,249 493,249 493,248 494,248 494,247 495,247 495,246 496,246 496,245 497,245 498,245 498,244 499,244 500,244 500,243 501,243 501,242 502,242 502,241 503,241 503,240 504,240 504,239 505,239 505,238 506,238 506,237 507,237 507,236 508,236 509,236 509,235 510,235 510,234 511,234 511,233 512,233 512,232 513,232 513,231 514,231 514,230 515,230 516,230 516,229 517,229 517,228 518,228 518,227 519,227 519,226 520,226 521,226 521,225 522,225 522,224 523,224 523,223 524,223 525,223 525,222 526,222 527,222 527,221 528,221 529,221 530,221 531,221 531,220 532,220 532,219 533,219 534,219 534,218 535,218 535,217 536,217 537,217 537,216 538,216 539,216 539,215 540,215 541,215 541,214 542,214 542,213 543,213 543,212 544,212 545,212 545,211 546,211 546,210 547,210 547,209 548,209 548,208 549,208 549,207 550,207 550,206 551,206 551,205 552,205 552,203 553,203 553,202 554,202 554,201 555,201 555,200 556,200 556,199 557,199 557,198 558,198 558,197 559,197 559,196 560,196 560,195 561,195 561,194 562,194 563,194 563,193 564,193 565,193 566,193 567,193 567,192 568,192 569,192 569,191 570,191 570,190 571,190 571,189 572,189 573,189 574,189 574,188 575,188 576,188 577,188 578,188 579,188 580,188 580,189 581,189 582,189 583,189 584,189 585,189 586,189 587,189 588,189 589,189 590,189 590,188 591,188 592,188 593,188 594,188 595,188 596,188 597,188 598,188 599,188 600,188 601,188 602,188 603,188 603,189 604,189 605,189 605,190 606,190 606,191 607,191 608,191 608,192 609,192 609,193 610,193 611,193 612,193 613,193 614,193 615,193 616,193 617,193 618,193 619,193 619,194 620,194 621,194 622,194 622,195 623,195 624,195 624,196 625,196 626,196 626,197 627,197 628,197 629,197 630,197 631,197 631,198 632,198 633,198 634,198 635,198 635,199 636,199 637,199 637,200 638,200 638,201 639,201 640,201 640,202 641,202 642,202 643,202 643,203 644,203 645,203 646,203 647,203 648,203 649,203 649,204 650,204 650,205 651,205 651,206 652,206 652,207 653,207 654,207 655,207 656,207 657,207 658,207 659,207 660,207 660,208 661,208 661,209 662,209 663,209 663,210 664,210 664,211 665,211 666,211 667,211 668,211 669,211 670,211 671,211 672,211 672,212 673,212 674,212 674,213 675,213 676,213 676,214 677,214 677,215 678,215 679,215 679,216 680,216 681,216 682,216 683,216 684,216 685,216 686,216 687,216 687,217 688,217 688,218 689,218 689,219 690,219 690,220 691,220 691,221 692,221 693,221 694,221 695,221 696,221 697,221 698,221 699,221 700,221 701,221 701,222 702,222 703,222 703,223 704,223 704,224 705,224 706,224 706,225 707,225 707,226 708,226 709,226 710,226 710,225 711,225 712,225 713,225 714,225 715,225 715,226 716,226 717,226 717,227 718,227 719,227 720,227 720,228 721,228 722,228 722,229 723,229 724,229 725,229 726,229 727,229 727,230 728,230 729,230 730,230 731,230 732,230 732,231 733,231 734,231 734,232 735,232 736,232 737,232 737,233 738,233 739,233 739,234 740,234 741,234 741,235 742,235 743,235 744,235 745,235 746,235 747,235 748,235 749,235 750,235 751,235 752,235 752,236 753,236 754,236 754,237 755,237 756,237 756,238 757,238 758,238 758,239 759,239 760,239 761,239 762,239 762,240 763,240 764,240 765,240 766,240 766,240 766,365" fill="#000" fill-opacity="0.193"/>
<polygon points="67,365 67,236 68,236 69,236 70,236 70,235 71,235 72,235 73,235 74,235 75,235 76,235 77,235 78,235 79,235 80,235 80,236 81,236 82,236 83,236 84,236 85,236 86,236 87,236 87,239 88,239 89,239 90,239 91,239 92,239 92,240 93,240 94,240 95,240 96,240 97,240 98,240 99,240 100,240 101,240 102,240 102,241 103,241 104,241 105,241 106,241 107,241 108,241 109,241 110,241 110,239 111,239 112,239 113,239 114,239 115,239 115,240 116,240 117,240 118,240 119,240 120,240 121,240 122,240 123,240 124,240 125,240 125,241 126,241 127,241 128,241 129,241 130,241 131,241 132,241 133,241 134,241 134,244 135,244 136,244 137,244 138,244 139,244 140,244 141,244 142,244 143,244 144,244 145,244 146,244 147,244 148,244 149,244 150,244 151,244 152,244 153,244 153,246 154,246 155,246 156,246 157,246 158,246 159,246 159,244 160,244 161,244 162,244 163,244 164,244 165,244 166,244 167,244 168,244 169,244 170,244 171,244 172,244 173,244 174,244 175,244 175,245 176,245 177,245 178,245 179,245 180,245 181,245 182,245 183,245 184,245 185,245 186,245 187,245 188,245 188,246 189,246 190,246 191,246 192,246 193,246 194,246 195,246 196,246 197,246 198,246 199,246 199,247 200,247 201,247 202,247 203,247 203,248 204,248 205,248 206,248 207,248 208,248 209,248 210,248 211,248 212,248 213,248 214,248 215,248 216,248 217,248 218,248 219,248 220,248 220,250 221,250 222,250 223,250 224,250 225,250 226,250 227,250 228,250 229,250 230,250 231,250 232,250 233,250 234,250 235,250 236,250 237,250 238,250 239,250 240,250 241,250 242,250 242,248 243,248 244,248 244,249 245,249 246,249 247,249 248,249 249,249 250,249 251,249 252,249 253,249 254,249 255,249 256,249 257,249 258,249 259,249 259,250 260,250 261,250 262,250 263,250 264,250 265,250 266,250 267,250 268,250 269,250 270,250 271,250 272,250 273,250 274,250 275,250 276,250 277,250 278,250 279,250 280,250 281,250 282,250 283,250 283,253 284,253 285,253 286,253 287,253 288,253 289,253 290,253 291,253 292,253 293,253 294,253 295,253 296,253 297,253 298,253 298,254 299,254 300,254 301,254 302,254 303,254 304,254 305,254 306,254 307,254 308,254 309,254 310,254 311,254 312,254 313,254 314,254 315,254 316,254 317,254 318,254 318,255 319,255 320,255 321,255 322,255 323,255 324,255 325,255 326,255 327,255 328,255 329,255 330,255 331,255 332,255 333,255 334,255 335,255 336,255 337,255 338,255 339,255 339,253 340,253 341,253 342,253 343,253 344,253 345,253 346,253 347,253 348,253 349,253 350,253 351,253 352,253 352,254 353,254 354,254 355,254 356,254 357,254 358,254 359,254 360,254 361,254 362,254 363,254 364,254 365,254 366,254 367,254 368,254 369,254 370,254 371,254 372,254 373,254 374,254 375,254 376,254 377,254 378,254 379,254 380,254 381,254 382,254 383,254 384,254 385,254 386,254 387,254 388,254 389,254 390,254 391,254 392,254 393,254 394,254 394,256 395,256 396,256 397,256 398,256 399,256 400,256 401,256 401,258 402,258 403,258 404,258 405,258 406,258 407,258 408,258 409,258 410,258 411,258 412,258 413,258 414,258 415,258 416,258 417,258 418,258 419,258 420,258 421,258 422,258 423,258 424,258 425,258 425,259 426,259 427,259 428,259 429,259 430,259 431,259 432,259 433,259 434,259 435,259 436,259 437,259 438,259 439,259 440,259 441,259 442,259 443,259 444,259 445,259 446,259 447,259 448,259 449,259 450,259 451,259 452,259 453,259 454,259 455,259 456,259 457,259 458,259 459,259 460,259 461,259 462,259 463,259 464,259 465,259 466,259 466,258 467,258 468,258 469,258 470,258 471,258 472,258 473,258 474,258 475,258 475,259 476,259 477,259 478,259 479,259 480,259 481,259 482,259 483,259 484,259 485,259 486,259 487,259 487,258 488,258 489,258 489,257 490,257 491,257 491,256 492,256 493,256 493,255 494,255 495,255 495,254 496,254 497,254 498,254 499,254 499,253 500,253 501,253 502,253 503,253 503,252 504,252 505,252 506,252 507,252 507,251 508,251 509,251 509,250 510,250 511,250 511,249 512,249 513,249 513,248 514,248 515,248 516,248 516,247 517,247 518,247 518,246 519,246 520,246 521,246 521,245 522,245 523,245 524,245 524,244 525,244 526,244 527,244 528,244 529,244 530,244 530,245 531,245 532,245 533,245 534,245 534,244 535,244 536,244 536,243 537,243 537,242 538,242 539,242 539,241 540,241 541,241 542,241 543,241 543,240 544,240 545,240 546,240 547,240 548,240 549,240 550,240 550,238 551,238 551,236 552,236 552,235 553,235 554,235 555,235 556,235 557,235 558,235 559,235 560,235 560,236 561,236 562,236 563,236 564,236 565,236 566,236 567,236 568,236 569,236 570,236 571,236 572,236 573,236 574,236 575,236 576,236 577,236 578,236 579,236 580,236 581,236 582,236 583,236 584,236 585,236 585,235 586,235 587,235 588,235 589,235 590,235 591,235 592,235 593,235 594,235 595,235 596,235 597,235 598,235 599,235 600,235 601,235 602,235 603,235 604,235 605,235 606,235 606,236 607,236 607,237 608,237 608,238 609,238 610,238 611,238 611,239 612,239 613,239 614,239 615,239 616,239 617,239 618,239 618,240 619,240 620,240 621,240 622,240 623,240 623,239 624,239 625,239 626,239 627,239 628,239 629,239 630,239 631,239 632,239 633,239 634,239 634,240 635,240 636,240 637,240 638,240 638,241 639,241 640,241 641,241 641,242 642,242 643,242 643,243 644,243 645,243 646,243 647,243 648,243 648,244 649,244 650,244 651,244 652,244 653,244 654,244 654,245 655,245 656,245 657,245 658,245 659,245 660,245 661,245 662,245 663,245 664,245 665,245 666,245 667,245 667,244 668,244 669,244 670,244 671,244 672,244 673,244 674,244 675,244 676,244 677,244 678,244 679,244 680,244 681,244 682,244 683,244 683,245 684,245 685,245 686,245 687,245 688,245 689,245 690,245 691,245 692,245 693,245 693,246 694,246 695,246 695,247 696,247 697,247 697,248 698,248 699,248 700,248 701,248 702,248 703,248 703,249 704,249 705,249 706,249 707,249 708,249 709,249 710,249 711,249 712,249 713,249 713,250 714,250 715,250 715,249 716,249 717,249 718,249 719,249 720,249 721,249 722,249 723,249 724,249 724,248 725,248 726,248 727,248 728,248 729,248 730,248 731,248 732,248 733,248 734,248 735,248 735,249 736,249 737,249 738,249 739,249 740,249 741,249 742,249 743,249 743,250 744,250 745,250 746,250 747,250 747,251 748,251 749,251 750,251 750,252 751,252 752,252 753,252 754,252 755,252 756,252 757,252 757,253 758,253 759,253 760,253 761,253 762,253 763,253 764,253 765,253 766,253 766,254 766,254 766,365" fill="#000" fill-opacity="0.196"/>
<polygon points="67,365 67,244 68,244 69,244 70,244 71,244 72,244 73,244 74,244 75,244 76,244 77,244 78,244 79,244 79,245 80,245 81,245 82,245 83,245 84,245 85,245 86,245 87,245 88,245 88,246 89,246 90,246 91,246 92,246 93,246 94,246 95,246 95,244 96,244 97,244 98,244 99,244 100,244 101,244 102,244 103,244 104,244 105,244 106,244 107,244 108,244 109,244 110,244 110,245 111,245 112,245 113,245 114,245 115,245 116,245 117,245 118,245 119,245 120,245 121,245 122,245 122,246 123,246 124,246 125,246 126,246 127,246 128,246 128,248 129,248 130,248 131,248 132,248 132,249 133,249 134,249 135,249 136,249 137,249 138,249 139,249 140,249 141,249 142,249 143,249 144,249 145,249 146,249 147,249 147,250 148,250 149,250 150,250 151,250 152,250 153,250 154,250 155,250 156,250 157,250 158,250 159,250 160,250 161,250 162,250 163,250 164,250 165,250 166,250 167,250 168,250 169,250 169,248 170,248 171,248 172,248 173,248 174,248 174,249 175,249 176,249 177,249 178,249 179,249 180,249 181,249 182,249 183,249 184,249 185,249 186,249 187,249 188,249 188,250 189,250 190,250 191,250 192,250 193,250 194,250 195,250 196,250 197,250 198,250 199,250 200,250 201,250 202,250 202,251 203,251 204,251 205,251 206,251 207,251 208,251 209,251 210,251 211,251 212,251 213,251 214,251 214,253 215,253 216,253 217,253 218,253 219,253 220,253 221,253 222,253 223,253 224,253 224,254 225,254 226,254 227,254 228,254 229,254 230,254 231,254 232,254 233,254 234,254 235,254 236,254 237,254 238,254 239,254 240,254 241,254 242,254 243,254 244,254 245,254 246,254 247,254 248,254 249,254 249,255 250,255 251,255 252,255 253,255 254,255 255,255 256,255 257,255 258,255 259,255 260,255 261,255 262,255 263,255 264,255 265,255 266,255 267,255 268,255 269,255 270,255 271,255 272,255 273,255 273,253 274,253 275,253 276,253 277,253 278,253 279,253 280,253 281,253 282,253 283,253 283,254 284,254 285,254 286,254 287,254 288,254 289,254 290,254 291,254 292,254 293,254 294,254 295,254 296,254 297,254 297,255 298,255 299,255 300,255 301,255 302,255 303,255 304,255 305,255 306,255 307,255 308,255 309,255 310,255 311,255 312,255 313,255 314,255 315,255 316,255 317,255 318,255 318,256 319,256 320,256 321,256 322,256 323,256 324,256 325,256 326,256 327,256 328,256 329,256 330,256 331,256 332,256 333,256 334,256 335,256 336,256 337,256 338,256 339,256 340,256 341,256 342,256 343,256 344,256 344,258 345,258 346,258 347,258 348,258 349,258 350,258 351,258 352,258 353,258 354,258 355,258 356,258 357,258 358,258 359,258 360,258 361,258 362,258 363,258 364,258 365,258 366,258 367,258 368,258 369,258 370,258 371,258 372,258 372,259 373,259 374,259 375,259 376,259 377,259 378,259 379,259 380,259 381,259 382,259 383,259 384,259 385,259 386,259 387,259 388,259 389,259 390,259 391,259 392,259 393,259 394,259 395,259 396,259 397,259 398,259 399,259 400,259 401,259 402,259 403,259 404,259 405,259 406,259 407,259 408,259 409,259 410,259 411,259 412,259 413,259 414,259 415,259 416,259 417,259 418,259 419,259 420,259 421,259 422,259 423,259 424,259 425,259 425,258 426,258 427,258 428,258 429,258 430,258 431,258 432,258 433,258 434,258 435,258 436,258 437,258 438,258 439,258 440,258 441,258 442,258 443,258 444,258 445,258 446,258 447,258 448,258 449,258 450,258 451,258 452,258 453,258 454,258 455,258 456,258 457,258 458,258 459,258 460,258 461,258 462,258 463,258 464,258 465,258 466,258 467,258 468,258 469,258 470,258 471,258 472,258 473,258 474,258 475,258 476,258 477,258 478,258 479,258 480,258 481,258 482,258 483,258 484,258 485,258 486,258 487,258 488,258 489,258 490,258 491,258 492,258 493,258 494,258 495,258 496,258 497,258 498,258 499,258 500,258 501,258 502,258 503,258 504,258 505,258 505,257 506,257 507,257 508,257 509,257 509,256 510,256 511,256 512,256 513,256 513,255 514,255 515,255 516,255 517,255 518,255 518,254 519,254 520,254 521,254 522,254 523,254 524,254 524,253 525,253 526,253 527,253 528,253 529,253 530,253 531,253 532,253 533,253 533,254 534,254 535,254 536,254 537,254 538,254 538,253 539,253 540,253 541,253 542,253 542,252 543,252 544,252 544,251 545,251 545,250 546,250 547,250 548,250 549,250 550,250 551,250 552,250 553,250 554,250 555,250 556,250 557,250 558,250 558,249 559,249 560,249 561,249 562,249 563,249 564,249 565,249 566,249 566,248 567,248 568,248 569,248 570,248 570,247 571,247 572,247 573,247 573,246 574,246 575,246 575,245 576,245 577,245 578,245 579,245 580,245 581,245 582,245 583,245 583,244 584,244 585,244 586,244 587,244 588,244 589,244 589,245 590,245 591,245 592,245 593,245 594,245 595,245 596,245 597,245 598,245 599,245 600,245 601,245 602,245 603,245 604,245 605,245 606,245 607,245 608,245 609,245 610,245 611,245 612,245 612,246 613,246 614,246 615,246 616,246 617,246 618,246 619,246 620,246 621,246 622,246 623,246 624,246 625,246 626,246 627,246 628,246 629,246 629,247 630,247 631,247 632,247 633,247 634,247 634,248 635,248 636,248 637,248 638,248 639,248 640,248 641,248 642,248 643,248 644,248 645,248 645,249 646,249 647,249 648,249 649,249 650,249 651,249 652,249 653,249 654,249 655,249 656,249 657,249 658,249 659,249 660,249 661,249 662,249 663,249 664,249 665,249 666,249 667,249 668,249 669,249 670,249 671,249 672,249 673,249 674,249 675,249 676,249 677,249 678,249 679,249 680,249 681,249 682,249 683,249 684,249 685,249 686,249 687,249 688,249 689,249 690,249 691,249 691,250 692,250 693,250 694,250 695,250 696,250 697,250 698,250 699,250 700,250 701,250 702,250 702,251 703,251 704,251 705,251 706,251 707,251 708,251 709,251 710,251 711,251 712,251 712,252 713,252 714,252 715,252 716,252 717,252 718,252 719,252 720,252 721,252 722,252 723,252 724,252 725,252 726,252 727,252 728,252 729,252 730,252 731,252 732,252 732,253 733,253 734,253 735,253 736,253 737,253 738,253 739,253 740,253 741,253 742,253 743,253 744,253 745,253 746,253 747,253 748,253 749,253 750,253 751,253 752,253 753,253 754,253 755,253 756,253 757,253 757,254 758,254 759,254 760,254 761,254 762,254 763,254 764,254 765,254 766,254 766,254 766,365" fill="#000" fill-opacity="0.162"/>
<polygon points="67,365 67,254 68,254 69,254 70,254 71,254 72,254 73,254 74,254 75,254 76,254 77,254 78,254 79,254 80,254 81,254 82,254 83,254 84,254 85,254 86,254 87,254 88,254 89,254 90,254 91,254 92,254 93,254 94,254 95,254 96,254 97,254 98,254 99,254 100,254 101,254 102,254 103,254 104,254 105,254 106,254 107,254 108,254 109,254 110,254 111,254 112,254 113,254 113,255 114,255 115,255 116,255 117,255 118,255 119,255 120,255 121,255 122,255 123,255 124,255 125,255 126,255 127,255 128,255 129,255 130,255 131,255 132,255 133,255 134,255 135,255 136,255 137,255 138,255 139,255 140,255 141,255 142,255 143,255 144,255 145,255 146,255 147,255 148,255 149,255 150,255 151,255 152,255 153,255 154,255 155,255 156,255 157,255 158,255 159,255 160,255 161,255 162,255 163,255 164,255 165,255 166,255 167,255 168,255 169,255 170,255 171,255 172,255 173,255 174,255 175,255 176,255 177,255 178,255 179,255 180,255 181,255 182,255 183,255 184,255 185,255 186,255 187,255 188,255 189,255 190,255 191,255 192,255 193,255 194,255 195,255 196,255 197,255 198,255 199,255 200,255 201,255 202,255 203,255 204,255 205,255 206,255 207,255 208,255 209,255 209,253 210,253 211,253 212,253 213,253 213,254 214,254 215,254 216,254 217,254 218,254 219,254 220,254 221,254 222,254 223,254 224,254 225,254 225,252 226,252 227,252 228,252 229,252 230,252 231,252 232,252 233,252 234,252 235,252 236,252 237,252 238,252 239,252 240,252 240,254 241,254 242,254 243,254 244,254 245,254 246,254 247,254 248,254 249,254 249,253 250,253 251,253 252,253 253,253 254,253 255,253 256,253 257,253 258,253 259,253 260,253 261,253 262,253 263,253 264,253 265,253 266,253 267,253 268,253 269,253 270,253 271,253 272,253 273,253 273,254 274,254 275,254 276,254 277,254 278,254 279,254 280,254 280,256 281,256 282,256 283,256 284,256 285,256 286,256 287,256 288,256 289,256 290,256 291,256 292,256 293,256 294,256 295,256 296,256 297,256 298,256 299,256 300,256 301,256 302,256 303,256 304,256 305,256 306,256 307,256 308,256 309,256 310,256 311,256 312,256 313,256 314,256 315,256 316,256 317,256 318,256 318,257 319,257 320,257 321,257 322,257 323,257 324,257 325,257 326,257 327,257 328,257 329,257 330,257 331,257 332,257 333,257 334,257 335,257 336,257 337,257 338,257 339,257 340,257 341,257 342,257 343,257 343,258 344,258 345,258 346,258 347,258 348,258 349,258 350,258 351,258 352,258 353,258 354,258 355,258 356,258 357,258 358,258 359,258 360,258 361,258 362,258 363,258 364,258 365,258 366,258 366,260 367,260 368,260 369,260 370,260 371,260 372,260 372,257 373,257 374,257 375,257 375,260 376,260 377,260 378,260 379,260 380,260 381,260 382,260 383,260 384,260 385,260 386,260 387,260 388,260 389,260 390,260 391,260 392,260 393,260 394,260 395,260 396,260 397,260 398,260 399,260 400,260 401,260 402,260 403,260 404,260 405,260 406,260 407,260 408,260 409,260 410,260 411,260 412,260 413,260 414,260 415,260 416,260 417,260 418,260 419,260 420,260 421,260 422,260 423,260 424,260 425,260 426,260 427,260 428,260 429,260 430,260 431,260 432,260 433,260 434,260 435,260 436,260 437,260 438,260 439,260 440,260 441,260 442,260 443,260 444,260 445,260 446,260 447,260 448,260 449,260 450,260 451,260 452,260 453,260 454,260 455,260 456,260 457,260 458,260 459,260 460,260 461,260 462,260 463,260 464,260 465,260 466,260 467,260 468,260 469,260 470,260 471,260 472,260 473,260 474,260 475,260 476,260 477,260 478,260 479,260 480,260 481,260 482,260 483,260 484,260 485,260 486,260 487,260 488,260 489,260 490,260 491,260 492,260 493,260 494,260 495,260 496,260 497,260 498,260 499,260 500,260 501,260 502,260 503,260 504,260 505,260 505,259 506,259 507,259 508,259 509,259 510,259 511,259 512,259 513,259 514,259 515,259 516,259 517,259 518,259 519,259 520,259 521,259 522,259 523,259 524,259 525,259 526,259 526,258 527,258 528,258 529,258 530,258 531,258 532,258 533,258 534,258 535,258 536,258 537,258 538,258 539,258 540,258 540,257 541,257 542,257 543,257 544,257 545,257 546,257 547,257 548,257 548,256 549,256 550,256 551,256 552,256 553,256 554,256 555,256 556,256 556,255 557,255 558,255 559,255 560,255 561,255 562,255 563,255 564,255 564,254 565,254 566,254 567,254 568,254 569,254 570,254 571,254 572,254 573,254 574,254 575,254 576,254 577,254 578,254 579,254 580,254 581,254 582,254 583,254 584,254 585,254 586,254 587,254 588,254 589,254 590,254 591,254 592,254 593,254 594,254 595,254 596,254 597,254 598,254 599,254 600,254 601,254 602,254 603,254 604,254 605,254 606,254 607,254 608,254 609,254 610,254 611,254 612,254 613,254 614,254 615,254 616,254 617,254 618,254 619,254 620,254 621,254 622,254 623,254 624,254 625,254 626,254 627,254 628,254 629,254 630,254 631,254 632,254 633,254 634,254 635,254 636,254 637,254 638,254 639,254 640,254 641,254 642,254 643,254 644,254 645,254 646,254 647,254 648,254 649,254 650,254 651,254 652,254 653,254 654,254 655,254 656,254 656,255 657,255 658,255 659,255 660,255 661,255 662,255 663,255 664,255 665,255 666,255 667,255 668,255 669,255 670,255 671,255 672,255 673,255 674,255 675,255 676,255 677,255 678,255 679,255 680,255 681,255 682,255 683,255 684,255 685,255 686,255 687,255 688,255 689,255 690,255 691,255 692,255 693,255 694,255 695,255 696,255 697,255 698,255 699,255 700,255 701,255 702,255 703,255 704,255 705,255 706,255 707,255 708,255 709,255 710,255 711,255 712,255 713,255 714,255 715,255 716,255 717,255 718,255 719,255 720,255 721,255 721,256 722,256 723,256 724,256 725,256 726,256 727,256 728,256 729,256 730,256 731,256 732,256 733,256 733,257 734,257 735,257 735,258 736,258 737,258 738,258 739,258 740,258 741,258 742,258 743,258 744,258 745,258 746,258 747,258 748,258 749,258 750,258 751,258 752,258 753,258 754,258 755,258 756,258 757,258 758,258 759,258 760,258 761,258 762,258 763,258 764,258 765,258 766,258 766,258 766,365" fill="#000" fill-opacity="0.194"/>
<polygon points="67,365 67,264 68,264 69,264 70,264 71,264 72,264 73,264 74,264 74,263 75,263 76,263 77,263 78,263 79,263 80,263 81,263 82,263 83,263 84,263 85,263 86,263 87,263 88,263 89,263 90,263 91,263 92,263 93,263 93,262 94,262 95,262 96,262 97,262 98,262 99,262 100,262 101,262 102,262 103,262 104,262 105,262 105,264 106,264 107,264 108,264 109,264 110,264 111,264 112,264 113,264 114,264 115,264 116,264 117,264 118,264 119,264 120,264 121,264 122,264 123,264 124,264 125,264 126,264 127,264 128,264 129,264 130,264 131,264 132,264 133,264 134,264 135,264 136,264 137,264 138,264 139,264 140,264 141,264 142,264 143,264 144,264 145,264 146,264 147,264 148,264 149,264 150,264 151,264 152,264 153,264 154,264 155,264 156,264 157,264 158,264 159,264 160,264 161,264 162,264 163,264 164,264 165,264 166,264 167,264 168,264 169,264 170,264 171,264 172,264 173,264 174,264 175,264 176,264 177,264 178,264 178,263 179,263 180,263 181,263 182,263 183,263 184,263 185,263 186,263 187,263 188,263 189,263 190,263 191,263 192,263 193,263 194,263 195,263 196,263 197,263 198,263 199,263 200,263 201,263 202,263 203,263 204,263 205,263 206,263 207,263 208,263 209,263 210,263 211,263 212,263 213,263 214,263 215,263 216,263 217,263 218,263 219,263 220,263 221,263 222,263 223,263 224,263 225,263 226,263 227,263 228,263 229,263 230,263 231,263 232,263 233,263 234,263 235,263 236,263 237,263 238,263 239,263 239,262 240,262 241,262 242,262 243,262 244,262 245,262 246,262 247,262 248,262 249,262 250,262 251,262 252,262 253,262 254,262 255,262 256,262 257,262 258,262 258,260 259,260 260,260 261,260 262,260 263,260 264,260 265,260 266,260 267,260 268,260 269,260 270,260 271,260 272,260 273,260 274,260 275,260 276,260 277,260 278,260 279,260 280,260 281,260 282,260 283,260 284,260 285,260 286,260 287,260 288,260 289,260 290,260 291,260 292,260 293,260 294,260 295,260 296,260 297,260 298,260 299,260 300,260 301,260 302,260 303,260 304,260 304,259 305,259 306,259 307,259 308,259 309,259 310,259 311,259 312,259 313,259 314,259 315,259 316,259 317,259 318,259 319,259 320,259 321,259 322,259 323,259 324,259 325,259 326,259 327,259 328,259 329,259 330,259 331,259 332,259 333,259 334,259 335,259 336,259 337,259 338,259 339,259 340,259 341,259 342,259 343,259 344,259 345,259 346,259 347,259 348,259 349,259 350,259 351,259 352,259 353,259 354,259 355,259 356,259 357,259 358,259 359,259 360,259 361,259 362,259 363,259 364,259 365,259 366,259 366,260 367,260 368,260 369,260 370,260 371,260 372,260 373,260 374,260 375,260 376,260 377,260 378,260 379,260 380,260 381,260 382,260 383,260 384,260 385,260 386,260 387,260 388,260 389,260 390,260 391,260 392,260 393,260 394,260 395,260 396,260 397,260 398,260 399,260 400,260 401,260 402,260 403,260 404,260 405,260 406,260 407,260 408,260 409,260 410,260 411,260 412,260 413,260 414,260 415,260 416,260 417,260 418,260 419,260 420,260 421,260 422,260 423,260 424,260 425,260 426,260 427,260 428,260 429,260 430,260 431,260 432,260 433,260 434,260 435,260 436,260 437,260 438,260 439,260 440,260 441,260 442,260 443,260 444,260 445,260 446,260 447,260 448,260 449,260 450,260 451,260 452,260 453,260 454,260 455,260 456,260 457,260 458,260 459,260 460,260 461,260 462,260 463,260 464,260 465,260 466,260 467,260 468,260 469,260 470,260 471,260 472,260 473,260 474,260 475,260 476,260 477,260 478,260 479,260 480,260 481,260 482,260 483,260 484,260 485,260 486,260 487,260 488,260 489,260 489,259 490,259 491,259 492,259 493,259 494,259 495,259 496,259 497,259 498,259 499,259 500,259 501,259 502,259 503,259 504,259 505,259 506,259 507,259 508,259 509,259 510,259 511,259 512,259 513,259 514,259 515,259 516,259 517,259 518,259 518,258 519,258 520,258 521,258 522,258 523,258 524,258 525,258 526,258 527,258 528,258 529,258 530,258 531,258 532,258 533,258 534,258 535,258 536,258 537,258 538,258 539,258 540,258 541,258 542,258 543,258 544,258 545,258 546,258 547,258 548,258 549,258 550,258 551,258 552,258 553,258 554,258 555,258 556,258 557,258 557,257 558,257 559,257 560,257 561,257 562,257 563,257 564,257 565,257 566,257 567,257 568,257 569,257 570,257 571,257 572,257 573,257 574,257 575,257 576,257 577,257 577,258 578,258 579,258 580,258 581,258 582,258 583,258 584,258 585,258 586,258 587,258 588,258 589,258 590,258 591,258 592,258 593,258 594,258 595,258 596,258 597,258 598,258 599,258 600,258 601,258 602,258 603,258 604,258 605,258 606,258 607,258 608,258 609,258 610,258 611,258 612,258 613,258 614,258 615,258 616,258 617,258 618,258 619,258 620,258 621,258 622,258 623,258 624,258 625,258 626,258 627,258 628,258 629,258 630,258 631,258 632,258 633,258 634,258 635,258 636,258 637,258 638,258 639,258 640,258 641,258 642,258 643,258 644,258 645,258 645,259 646,259 647,259 648,259 649,259 649,260 650,260 651,260 652,260 653,260 654,260 655,260 656,260 657,260 658,260 659,260 660,260 661,260 662,260 663,260 664,260 665,260 666,260 667,260 668,260 669,260 670,260 671,260 672,260 673,260 674,260 675,260 676,260 677,260 678,260 679,260 680,260 681,260 682,260 683,260 684,260 685,260 686,260 687,260 688,260 689,260 690,260 691,260 692,260 693,260 694,260 695,260 696,260 697,260 698,260 699,260 700,260 701,260 702,260 703,260 704,260 705,260 706,260 707,260 708,260 709,260 710,260 711,260 712,260 713,260 714,260 715,260 716,260 717,260 718,260 719,260 720,260 721,260 722,260 723,260 724,260 725,260 726,260 727,260 728,260 728,261 729,261 730,261 731,261 731,262 732,262 733,262 733,263 734,263 735,263 736,263 736,264 737,264 738,264 739,264 740,264 741,264 742,264 743,264 744,264 745,264 746,264 747,264 748,264 749,264 750,264 751,264 752,264 753,264 754,264 755,264 756,264 757,264 758,264 759,264 760,264 761,264 762,264 763,264 764,264 765,264 766,264 766,264 766,365" fill="#000" fill-opacity="0.320"/>
<polyline points="67,264 68,264 69,264 70,264 71,264 72,264 73,264 74,264 74,263 75,263 76,263 77,263 78,263 79,263 80,263 81,263 82,263 83,263 84,263 85,263 86,263 87,263 88,263 89,263 90,263 91,263 92,263 93,263 93,262 94,262 95,262 96,262 97,262 98,262 99,262 100,262 101,262 102,262 103,262 104,262 105,262 105,264 106,264 107,264 108,264 109,264 110,264 111,264 112,264 113,264 114,264 115,264 116,264 117,264 118,264 119,264 120,264 121,264 122,264 123,264 124,264 125,264 126,264 127,264 128,264 129,264 130,264 131,264 132,264 133,264 134,264 135,264 136,264 137,264 138,264 139,264 140,264 141,264 142,264 143,264 144,264 145,264 146,264 147,264 148,264 149,264 150,264 151,264 152,264 153,264 154,264 155,264 156,264 157,264 158,264 159,264 160,264 161,264 162,264 163,264 164,264 165,264 166,264 167,264 168,264 169,264 170,264 171,264 172,264 173,264 174,264 175,264 176,264 177,264 178,264 178,263 179,263 180,263 181,263 182,263 183,263 184,263 185,263 186,263 187,263 188,263 189,263 190,263 191,263 192,263 193,263 194,263 195,263 196,263 197,263 198,263 199,263 200,263 201,263 202,263 203,263 204,263 205,263 206,263 207,263 208,263 209,263 210,263 211,263 212,263 213,263 214,263 215,263 216,263 217,263 218,263 219,263 220,263 221,263 222,263 223,263 224,263 225,263 226,263 227,263 228,263 229,263 230,263 231,263 232,263 233,263 234,263 235,263 236,263 237,263 238,263 239,263 239,262 240,262 241,262 242,262 243,262 244,262 245,262 246,262 247,262 248,262 249,262 250,262 251,262 252,262 253,262 254,262 255,262 256,262 257,262 258,262 258,260 259,260 260,260 261,260 262,260 263,260 264,260 265,260 266,260 267,260 268,260 269,260 270,260 271,260 272,260 273,260 274,260 275,260 276,260 277,260 278,260 279,260 280,260 281,260 282,260 283,260 284,260 285,260 286,260 287,260 288,260 289,260 290,260 291,260 292,260 293,260 294,260 295,260 296,260 297,260 298,260 299,260 300,260 301,260 302,260 303,260 304,260 304,259 305,259 306,259 307,259 308,259 309,259 310,259 311,259 312,259 313,259 314,259 315,259 316,259 317,259 318,259 319,259 320,259 321,259 322,259 323,259 324,259 325,259 326,259 327,259 328,259 329,259 330,259 331,259 332,259 333,259 334,259 335,259 336,259 337,259 338,259 339,259 340,259 341,259 342,259 343,259 344,259 345,259 346,259 347,259 348,259 349,259 350,259 351,259 352,259 353,259 354,259 355,259 356,259 357,259 358,259 359,259 360,259 361,259 362,259 363,259 364,259 365,259 366,259 366,260 367,260 368,260 369,260 370,260 371,260 372,260 373,260 374,260 375,260 376,260 377,260 378,260 379,260 380,260 381,260 382,260 383,260 384,260 385,260 386,260 387,260 388,260 389,260 390,260 391,260 392,260 393,260 394,260 395,260 396,260 397,260 398,260 399,260 400,260 401,260 402,260 403,260 404,260 405,260 406,260 407,260 408,260 409,260 410,260 411,260 412,260 413,260 414,260 415,260 416,260 417,260 418,260 419,260 420,260 421,260 422,260 423,260 424,260 425,260 426,260 427,260 428,260 429,260 430,260 431,260 432,260 433,260 434,260 435,260 436,260 437,260 438,260 439,260 440,260 441,260 442,260 443,260 444,260 445,260 446,260 447,260 448,260 449,260 450,260 451,260 452,260 453,260 454,260 455,260 456,260 457,260 458,260 459,260 460,260 461,260 462,260 463,260 464,260 465,260 466,260 467,260 468,260 469,260 470,260 471,260 472,260 473,260 474,260 475,260 476,260 477,260 478,260 479,260 480,260 481,260 482,260 483,260 484,260 485,260 486,260 487,260 488,260 489,260 489,259 490,259 491,259 492,259 493,259 494,259 495,259 496,259 497,259 498,259 499,259 500,259 501,259 502,259 503,259 504,259 505,259 506,259 507,259 508,259 509,259 510,259 511,259 512,259 513,259 514,259 515,259 516,259 517,259 518,259 518,258 519,258 520,258 521,258 522,258 523,258 524,258 525,258 526,258 527,258 528,258 529,258 530,258 531,258 532,258 533,258 534,258 535,258 536,258 537,258 538,258 539,258 540,258 541,258 542,258 543,258 544,258 545,258 546,258 547,258 548,258 549,258 550,258 551,258 552,258 553,258 554,258 555,258 556,258 557,258 557,257 558,257 559,257 560,257 561,257 562,257 563,257 564,257 565,257 566,257 567,257 568,257 569,257 570,257 571,257 572,257 573,257 574,257 575,257 576,257 577,257 577,258 578,258 579,258 580,258 581,258 582,258 583,258 584,258 585,258 586,258 587,258 588,258 589,258 590,258 591,258 592,258 593,258 594,258 595,258 596,258 597,258 598,258 599,258 600,258 601,258 602,258 603,258 604,258 605,258 606,258 607,258 608,258 609,258 610,258 611,258 612,258 613,258 614,258 615,258 616,258 617,258 618,258 619,258 620,258 621,258 622,258 623,258 624,258 625,258 626,258 627,258 628,258 629,258 630,258 631,258 632,258 633,258 634,258 635,258 636,258 637,258 638,258 639,258 640,258 641,258 642,258 643,258 644,258 645,258 645,259 646,259 647,259 648,259 649,259 649,260 650,260 651,260 652,260 653,260 654,260 655,260 656,260 657,260 658,260 659,260 660,260 661,260 662,260 663,260 664,260 665,260 666,260 667,260 668,260 669,260 670,260 671,260 672,260 673,260 674,260 675,260 676,260 677,260 678,260 679,260 680,260 681,260 682,260 683,260 684,260 685,260 686,260 687,260 688,260 689,260 690,260 691,260 692,260 693,260 694,260 695,260 696,260 697,260 698,260 699,260 700,260 701,260 702,260 703,260 704,260 705,260 706,260 707,260 708,260 709,260 710,260 711,260 712,260 713,260 714,260 715,260 716,260 717,260 718,260 719,260 720,260 721,260 722,260 723,260 724,260 725,260 726,260 727,260 728,260 728,261 729,261 730,261 731,261 731,262 732,262 733,262 733,263 734,263 735,263 736,263 736,264 737,264 738,264 739,264 740,264 741,264 742,264 743,264 744,264 745,264 746,264 747,264 748,264 749,264 750,264 751,264 752,264 753,264 754,264 755,264 756,264 757,264 758,264 759,264 760,264 761,264 762,264 763,264 764,264 765,264 766,264 766,264" fill="none" stroke="#009b9b" stroke-width="2" stroke-linejoin="miter" shape-rendering="crispEdges"/>
<polyline points="67,254 68,254 69,254 70,254 71,254 72,254 73,254 74,254 75,254 76,254 77,254 78,254 79,254 80,254 81,254 82,254 83,254 84,254 85,254 86,254 87,254 88,254 89,254 90,254 91,254 92,254 93,254 94,254 95,254 96,254 97,254 98,254 99,254 100,254 101,254 102,254 103,254 104,254 105,254 106,254 107,254 108,254 109,254 110,254 111,254 112,254 113,254 113,255 114,255 115,255 116,255 117,255 118,255 119,255 120,255 121,255 122,255 123,255 124,255 125,255 126,255 127,255 128,255 129,255 130,255 131,255 132,255 133,255 134,255 135,255 136,255 137,255 138,255 139,255 140,255 141,255 142,255 143,255 144,255 145,255 146,255 147,255 148,255 149,255 150,255 151,255 152,255 153,255 154,255 155,255 156,255 157,255 158,255 159,255 160,255 161,255 162,255 163,255 164,255 165,255 166,255 167,255 168,255 169,255 170,255 171,255 172,255 173,255 174,255 175,255 176,255 177,255 178,255 179,255 180,255 181,255 182,255 183,255 184,255 185,255 186,255 187,255 188,255 189,255 190,255 191,255 192,255 193,255 194,255 195,255 196,255 197,255 198,255 199,255 200,255 201,255 202,255 203,255 204,255 205,255 206,255 207,255 208,255 209,255 209,253 210,253 211,253 212,253 213,253 213,254 214,254 215,254 216,254 217,254 218,254 219,254 220,254 221,254 222,254 223,254 224,254 225,254 225,252 226,252 227,252 228,252 229,252 230,252 231,252 232,252 233,252 234,252 235,252 236,252 237,252 238,252 239,252 240,252 240,254 241,254 242,254 243,254 244,254 245,254 246,254 247,254 248,254 249,254 249,253 250,253 251,253 252,253 253,253 254,253 255,253 256,253 257,253 258,253 259,253 260,253 261,253 262,253 263,253 264,253 265,253 266,253 267,253 268,253 269,253 270,253 271,253 272,253 273,253 273,254 274,254 275,254 276,254 277,254 278,254 279,254 280,254 280,256 281,256 282,256 283,256 284,256 285,256 286,256 287,256 288,256 289,256 290,256 291,256 292,256 293,256 294,256 295,256 296,256 297,256 298,256 299,256 300,256 301,256 302,256 303,256 304,256 305,256 306,256 307,256 308,256 309,256 310,256 311,256 312,256 313,256 314,256 315,256 316,256 317,256 318,256 318,257 319,257 320,257 321,257 322,257 323,257 324,257 325,257 326,257 327,257 328,257 329,257 330,257 331,257 332,257 333,257 334,257 335,257 336,257 337,257 338,257 339,257 340,257 341,257 342,257 343,257 343,258 344,258 345,258 346,258 347,258 348,258 349,258 350,258 351,258 352,258 353,258 354,258 355,258 356,258 357,258 358,258 359,258 360,258 361,258 362,258 363,258 364,258 365,258 366,258 366,260 367,260 368,260 369,260 370,260 371,260 372,260 372,257 373,257 374,257 375,257 375,260 376,260 377,260 378,260 379,260 380,260 381,260 382,260 383,260 384,260 385,260 386,260 387,260 388,260 389,260 390,260 391,260 392,260 393,260 394,260 395,260 396,260 397,260 398,260 399,260 400,260 401,260 402,260 403,260 404,260 405,260 406,260 407,260 408,260 409,260 410,260 411,260 412,260 413,260 414,260 415,260 416,260 417,260 418,260 419,260 420,260 421,260 422,260 423,260 424,260 425,260 426,260 427,260 428,260 429,260 430,260 431,260 432,260 433,260 434,260 435,260 436,260 437,260 438,260 439,260 440,260 441,260 442,260 443,260 444,260 445,260 446,260 447,260 448,260 449,260 450,260 451,260 452,260 453,260 454,260 455,260 456,260 457,260 458,260 459,260 460,260 461,260 462,260 463,260 464,260 465,260 466,260 467,260 468,260 469,260 470,260 471,260 472,260 473,260 474,260 475,260 476,260 477,260 478,260 479,260 480,260 481,260 482,260 483,260 484,260 485,260 486,260 487,260 488,260 489,260 490,260 491,260 492,260 493,260 494,260 495,260 496,260 497,260 498,260 499,260 500,260 501,260 502,260 503,260 504,260 505,260 505,259 506,259 507,259 508,259 509,259 510,259 511,259 512,259 513,259 514,259 515,259 516,259 517,259 518,259 519,259 520,259 521,259 522,259 523,259 524,259 525,259 526,259 526,258 527,258 528,258 529,258 530,258 531,258 532,258 533,258 534,258 535,258 536,258 537,258 538,258 539,258 540,258 540,257 541,257 542,257 543,257 544,257 545,257 546,257 547,257 548,257 548,256 549,256 550,256 551,256 552,256 553,256 554,256 555,256 556,256 556,255 557,255 558,255 559,255 560,255 561,255 562,255 563,255 564,255 564,254 565,254 566,254 567,254 568,254 569,254 570,254 571,254 572,254 573,254 574,254 575,254 576,254 577,254 578,254 579,254 580,254 581,254 582,254 583,254 584,254 585,254 586,254 587,254 588,254 589,254 590,254 591,254 592,254 593,254 594,254 595,254 596,254 597,254 598,254 599,254 600,254 601,254 602,254 603,254 604,254 605,254 606,254 607,254 608,254 609,254 610,254 611,254 612,254 613,254 614,254 615,254 616,254 617,254 618,254 619,254 620,254 621,254 622,254 623,254 624,254 625,254 626,254 627,254 628,254 629,254 630,254 631,254 632,254 633,254 634,254 635,254 636,254 637,254 638,254 639,254 640,254 641,254 642,254 643,254 644,254 645,254 646,254 647,254 648,254 649,254 650,254 651,254 652,254 653,254 654,254 655,254 656,254 656,255 657,255 658,255 659,255 660,255 661,255 662,255 663,255 664,255 665,255 666,255 667,255 668,255 669,255 670,255 671,255 672,255 673,255 674,255 675,255 676,255 677,255 678,255 679,255 680,255 681,255 682,255 683,255 684,255 685,255 686,255 687,255 688,255 689,255 690,255 691,255 692,255 693,255 694,255 695,255 696,255 697,255 698,255 699,255 700,255 701,255 702,255 703,255 704,255 705,255 706,255 707,255 708,255 709,255 710,255 711,255 712,255 713,255 714,255 715,255 716,255 717,255 718,255 719,255 720,255 721,255 721,256 722,256 723,256 724,256 725,256 726,256 727,256 728,256 729,256 730,256 731,256 732,256 733,256 733,257 734,257 735,257 735,258 736,258 737,258 738,258 739,258 740,258 741,258 742,258 743,258 744,258 745,258 746,258 747,258 748,258 749,258 750,258 751,258 752,258 753,258 754,258 755,258 756,258 757,258 758,258 759,258 760,258 761,258 762,258 763,258 764,258 765,258 766,258 766,258" fill="none" stroke="#00009b" stroke-width="2" stroke-linejoin="miter" shape-rendering="crispEdges"/>
<polyline points="67,244 68,244 69,244 70,244 71,244 72,244 73,244 74,244 75,244 76,244 77,244 78,244 79,244 79,245 80,245 81,245 82,245 83,245 84,245 85,245 86,245 87,245 88,245 88,246 89,246 90,246 91,246 92,246 93,246 94,246 95,246 95,244 96,244 97,244 98,244 99,244 100,244 101,244 102,244 103,244 104,244 105,244 106,244 107,244 108,244 109,244 110,244 110,245 111,245 112,245 113,245 114,245 115,245 116,245 117,245 118,245 119,245 120,245 121,245 122,245 122,246 123,246 124,246 125,246 126,246 127,246 128,246 128,248 129,248 130,248 131,248 132,248 132,249 133,249 134,249 135,249 136,249 137,249 138,249 139,249 140,249 141,249 142,249 143,249 144,249 145,249 146,249 147,249 147,250 148,250 149,250 150,250 151,250 152,250 153,250 154,250 155,250 156,250 157,250 158,250 159,250 160,250 161,250 162,250 163,250 164,250 165,250 166,250 167,250 168,250 169,250 169,248 170,248 171,248 172,248 173,248 174,248 174,249 175,249 176,249 177,249 178,249 179,249 180,249 181,249 182,249 183,249 184,249 185,249 186,249 187,249 188,249 188,250 189,250 190,250 191,250 192,250 193,250 194,250 195,250 196,250 197,250 198,250 199,250 200,250 201,250 202,250 202,251 203,251 204,251 205,251 206,251 207,251 208,251 209,251 210,251 211,251 212,251 213,251 214,251 214,253 215,253 216,253 217,253 218,253 219,253 220,253 221,253 222,253 223,253 224,253 224,254 225,254 226,254 227,254 228,254 229,254 230,254 231,254 232,254 233,254 234,254 235,254 236,254 237,254 238,254 239,254 240,254 241,254 242,254 243,254 244,254 245,254 246,254 247,254 248,254 249,254 249,255 250,255 251,255 252,255 253,255 254,255 255,255 256,255 257,255 258,255 259,255 260,255 261,255 262,255 263,255 264,255 265,255 266,255 267,255 268,255 269,255 270,255 271,255 272,255 273,255 273,253 274,253 275,253 276,253 277,253 278,253 279,253 280,253 281,253 282,253 283,253 283,254 284,254 285,254 286,254 287,254 288,254 289,254 290,254 291,254 292,254 293,254 294,254 295,254 296,254 297,254 297,255 298,255 299,255 300,255 301,255 302,255 303,255 304,255 305,255 306,255 307,255 308,255 309,255 310,255 311,255 312,255 313,255 314,255 315,255 316,255 317,255 318,255 318,256 319,256 320,256 321,256 322,256 323,256 324,256 325,256 326,256 327,256 328,256 329,256 330,256 331,256 332,256 333,256 334,256 335,256 336,256 337,256 338,256 339,256 340,256 341,256 342,256 343,256 344,256 344,258 345,258 346,258 347,258 348,258 349,258 350,258 351,258 352,258 353,258 354,258 355,258 356,258 357,258 358,258 359,258 360,258 361,258 362,258 363,258 364,258 365,258 366,258 367,258 368,258 369,258 370,258 371,258 372,258 372,259 373,259 374,259 375,259 376,259 377,259 378,259 379,259 380,259 381,259 382,259 383,259 384,259 385,259 386,259 387,259 388,259 389,259 390,259 391,259 392,259 393,259 394,259 395,259 396,259 397,259 398,259 399,259 400,259 401,259 402,259 403,259 404,259 405,259 406,259 407,259 408,259 409,259 410,259 411,259 412,259 413,259 414,259 415,259 416,259 417,259 418,259 419,259 420,259 421,259 422,259 423,259 424,259 425,259 425,258 426,258 427,258 428,258 429,258 430,258 431,258 432,258 433,258 434,258 435,258 436,258 437,258 438,258 439,258 440,258 441,258 442,258 443,258 444,258 445,258 446,258 447,258 448,258 449,258 450,258 451,258 452,258 453,258 454,258 455,258 456,258 457,258 458,258 459,258 460,258 461,258 462,258 463,258 464,258 465,258 466,258 467,258 468,258 469,258 470,258 471,258 472,258 473,258 474,258 475,258 476,258 477,258 478,258 479,258 480,258 481,258 482,258 483,258 484,258 485,258 486,258 487,258 488,258 489,258 490,258 491,258 492,258 493,258 494,258 495,258 496,258 497,258 498,258 499,258 500,258 501,258 502,258 503,258 504,258 505,258 505,257 506,257 507,257 508,257 509,257 509,256 510,256 511,256 512,256 513,256 513,255 514,255 515,255 516,255 517,255 518,255 518,254 519,254 520,254 521,254 522,254 523,254 524,254 524,253 525,253 526,253 527,253 528,253 529,253 530,253 531,253 532,253 533,253 533,254 534,254 535,254 536,254 537,254 538,254 538,253 539,253 540,253 541,253 542,253 542,252 543,252 544,252 544,251 545,251 545,250 546,250 547,250 548,250 549,250 550,250 551,250 552,250 553,250 554,250 555,250 556,250 557,250 558,250 558,249 559,249 560,249 561,249 562,249 563,249 564,249 565,249 566,249 566,248 567,248 568,248 569,248 570,248 570,247 571,247 572,247 573,247 573,246 574,246 575,246 575,245 576,245 577,245 578,245 579,245 580,245 581,245 582,245 583,245 583,244 584,244 585,244 586,244 587,244 588,244 589,244 589,245 590,245 591,245 592,245 593,245 594,245 595,245 596,245 597,245 598,245 599,245 600,245 601,245 602,245 603,245 604,245 605,245 606,245 607,245 608,245 609,245 610,245 611,245 612,245 612,246 613,246 614,246 615,246 616,246 617,246 618,246 619,246 620,246 621,246 622,246 623,246 624,246 625,246 626,246 627,246 628,246 629,246 629,247 630,247 631,247 632,247 633,247 634,247 634,248 635,248 636,248 637,248 638,248 639,248 640,248 641,248 642,248 643,248 644,248 645,248 645,249 646,249 647,249 648,249 649,249 650,249 651,249 652,249 653,249 654,249 655,249 656,249 657,249 658,249 659,249 660,249 661,249 662,249 663,249 664,249 665,249 666,249 667,249 668,249 669,249 670,249 671,249 672,249 673,249 674,249 675,249 676,249 677,249 678,249 679,249 680,249 681,249 682,249 683,249 684,249 685,249 686,249 687,249 688,249 689,249 690,249 691,249 691,250 692,250 693,250 694,250 695,250 696,250 697,250 698,250 699,250 700,250 701,250 702,250 702,251 703,251 704,251 705,251 706,251 707,251 708,251 709,251 710,251 711,251 712,251 712,252 713,252 714,252 715,252 716,252 717,252 718,252 719,252 720,252 721,252 722,252 723,252 724,252 725,252 726,252 727,252 728,252 729,252 730,252 731,252 732,252 732,253 733,253 734,253 735,253 736,253 737,253 738,253 739,253 740,253 741,253 742,253 743,253 744,253 745,253 746,253 747,253 748,253 749,253 750,253 751,253 752,253 753,253 754,253 755,253 756,253 757,253 757,254 758,254 759,254 760,254 761,254 762,254 763,254 764,254 765,254 766,254 766,254" fill="none" stroke="#009b00" stroke-width="2" stroke-linejoin="miter" shape-rendering="crispEdges"/>
<polyline points="67,236 68,236 69,236 70,236 70,235 71,235 72,235 73,235 74,235 75,235 76,235 77,235 78,235 79,235 80,235 80,236 81,236 82,236 83,236 84,236 85,236 86,236 87,236 87,239 88,239 89,239 90,239 91,239 92,239 92,240 93,240 94,240 95,240 96,240 97,240 98,240 99,240 100,240 101,240 102,240 102,241 103,241 104,241 105,241 106,241 107,241 108,241 109,241 110,241 110,239 111,239 112,239 113,239 114,239 115,239 115,240 116,240 117,240 118,240 119,240 120,240 121,240 122,240 123,240 124,240 125,240 125,241 126,241 127,241 128,241 129,241 130,241 131,241 132,241 133,241 134,241 134,244 135,244 136,244 137,244 138,244 139,244 140,244 141,244 142,244 143,244 144,244 145,244 146,244 147,244 148,244 149,244 150,244 151,244 152,244 153,244 153,246 154,246 155,246 156,246 157,246 158,246 159,246 159,244 160,244 161,244 162,244 163,244 164,244 165,244 166,244 167,244 168,244 169,244 170,244 171,244 172,244 173,244 174,244 175,244 175,245 176,245 177,245 178,245 179,245 180,245 181,245 182,245 183,245 184,245 185,245 186,245 187,245 188,245 188,246 189,246 190,246 191,246 192,246 193,246 194,246 195,246 196,246 197,246 198,246 199,246 199,247 200,247 201,247 202,247 203,247 203,248 204,248 205,248 206,248 207,248 208,248 209,248 210,248 211,248 212,248 213,248 214,248 215,248 216,248 217,248 218,248 219,248 220,248 220,250 221,250 222,250 223,250 224,250 225,250 226,250 227,250 228,250 229,250 230,250 231,250 232,250 233,250 234,250 235,250 236,250 237,250 238,250 239,250 240,250 241,250 242,250 242,248 243,248 244,248 244,249 245,249 246,249 247,249 248,249 249,249 250,249 251,249 252,249 253,249 254,249 255,249 256,249 257,249 258,249 259,249 259,250 260,250 261,250 262,250 263,250 264,250 265,250 266,250 267,250 268,250 269,250 270,250 271,250 272,250 273,250 274,250 275,250 276,250 277,250 278,250 279,250 280,250 281,250 282,250 283,250 283,253 284,253 285,253 286,253 287,253 288,253 289,253 290,253 291,253 292,253 293,253 294,253 295,253 296,253 297,253 298,253 298,254 299,254 300,254 301,254 302,254 303,254 304,254 305,254 306,254 307,254 308,254 309,254 310,254 311,254 312,254 313,254 314,254 315,254 316,254 317,254 318,254 318,255 319,255 320,255 321,255 322,255 323,255 324,255 325,255 326,255 327,255 328,255 329,255 330,255 331,255 332,255 333,255 334,255 335,255 336,255 337,255 338,255 339,255 339,253 340,253 341,253 342,253 343,253 344,253 345,253 346,253 347,253 348,253 349,253 350,253 351,253 352,253 352,254 353,254 354,254 355,254 356,254 357,254 358,254 359,254 360,254 361,254 362,254 363,254 364,254 365,254 366,254 367,254 368,254 369,254 370,254 371,254 372,254 373,254 374,254 375,254 376,254 377,254 378,254 379,254 380,254 381,254 382,254 383,254 384,254 385,254 386,254 387,254 388,254 389,254 390,254 391,254 392,254 393,254 394,254 394,256 395,256 396,256 397,256 398,256 399,256 400,256 401,256 401,258 402,258 403,258 404,258 405,258 406,258 407,258 408,258 409,258 410,258 411,258 412,258 413,258 414,258 415,258 416,258 417,258 418,258 419,258 420,258 421,258 422,258 423,258 424,258 425,258 425,259 426,259 427,259 428,259 429,259 430,259 431,259 432,259 433,259 434,259 435,259 436,259 437,259 438,259 439,259 440,259 441,259 442,259 443,259 444,259 445,259 446,259 447,259 448,259 449,259 450,259 451,259 452,259 453,259 454,259 455,259 456,259 457,259 458,259 459,259 460,259 461,259 462,259 463,259 464,259 465,259 466,259 466,258 467,258 468,258 469,258 470,258 471,258 472,258 473,258 474,258 475,258 475,259 476,259 477,259 478,259 479,259 480,259 481,259 482,259 483,259 484,259 485,259 486,259 487,259 487,258 488,258 489,258 489,257 490,257 491,257 491,256 492,256 493,256 493,255 494,255 495,255 495,254 496,254 497,254 498,254 499,254 499,253 500,253 501,253 502,253 503,253 503,252 504,252 505,252 506,252 507,252 507,251 508,251 509,251 509,250 510,250 511,250 511,249 512,249 513,249 513,248 514,248 515,248 516,248 516,247 517,247 518,247 518,246 519,246 520,246 521,246 521,245 522,245 523,245 524,245 524,244 525,244 526,244 527,244 528,244 529,244 530,244 530,245 531,245 532,245 533,245 534,245 534,244 535,244 536,244 536,243 537,243 537,242 538,242 539,242 539,241 540,241 541,241 542,241 543,241 543,240 544,240 545,240 546,240 547,240 548,240 549,240 550,240 550,238 551,238 551,236 552,236 552,235 553,235 554,235 555,235 556,235 557,235 558,235 559,235 560,235 560,236 561,236 562,236 563,236 564,236 565,236 566,236 567,236 568,236 569,236 570,236 571,236 572,236 573,236 574,236 575,236 576,236 577,236 578,236 579,236 580,236 581,236 582,236 583,236 584,236 585,236 585,235 586,235 587,235 588,235 589,235 590,235 591,235 592,235 593,235 594,235 595,235 596,235 597,235 598,235 599,235 600,235 601,235 602,235 603,235 604,235 605,235 606,235 606,236 607,236 607,237 608,237 608,238 609,238 610,238 611,238 611,239 612,239 613,239 614,239 615,239 616,239 617,239 618,239 618,240 619,240 620,240 621,240 622,240 623,240 623,239 624,239 625,239 626,239 627,239 628,239 629,239 630,239 631,239 632,239 633,239 634,239 634,240 635,240 636,240 637,240 638,240 638,241 639,241 640,241 641,241 641,242 642,242 643,242 643,243 644,243 645,243 646,243 647,243 648,243 648,244 649,244 650,244 651,244 652,244 653,244 654,244 654,245 655,245 656,245 657,245 658,245 659,245 660,245 661,245 662,245 663,245 664,245 665,245 666,245 667,245 667,244 668,244 669,244 670,244 671,244 672,244 673,244 674,244 675,244 676,244 677,244 678,244 679,244 680,244 681,244 682,244 683,244 683,245 684,245 685,245 686,245 687,245 688,245 689,245 690,245 691,245 692,245 693,245 693,246 694,246 695,246 695,247 696,247 697,247 697,248 698,248 699,248 700,248 701,248 702,248 703,248 703,249 704,249 705,249 706,249 707,249 708,249 709,249 710,249 711,249 712,249 713,249 713,250 714,250 715,250 715,249 716,249 717,249 718,249 719,249 720,249 721,249 722,249 723,249 724,249 724,248 725,248 726,248 727,248 728,248 729,248 730,248 731,248 732,248 733,248 734,248 735,248 735,249 736,249 737,249 738,249 739,249 740,249 741,249 742,249 743,249 743,250 744,250 745,250 746,250 747,250 747,251 748,251 749,251 750,251 750,252 751,252 752,252 753,252 754,252 755,252 756,252 757,252 757,253 758,253 759,253 760,253 761,253 762,253 763,253 764,253 765,253 766,253 766,254 766,254" fill="none" stroke="#9b0000" stroke-width="2" stroke-linejoin="miter" shape-rendering="crispEdges"/>
<polyline points="67,198 68,198 69,198 70,198 71,198 72,198 73,198 74,198 75,198 76,198 76,199 77,199 78,199 79,199 80,199 80,200 81,200 82,200 82,201 83,201 83,202 84,202 84,203 85,203 86,203 87,203 88,203 89,203 90,203 91,203 92,203 93,203 94,203 94,204 95,204 96,204 96,205 97,205 98,205 98,206 99,206 99,207 100,207 101,207 102,207 102,208 103,208 104,208 105,208 106,208 107,208 108,208 109,208 109,207 110,207 111,207 112,207 113,207 113,208 114,208 115,208 116,208 116,209 117,209 118,209 118,210 119,210 119,211 120,211 120,212 121,212 122,212 123,212 124,212 125,212 126,212 127,212 127,211 128,211 129,211 130,211 131,211 131,212 132,212 133,212 134,212 135,212 135,213 136,213 137,213 137,214 138,214 139,214 140,214 140,215 141,215 142,215 143,215 144,215 145,215 146,215 147,215 148,215 149,215 149,216 150,216 151,216 152,216 152,217 153,217 154,217 155,217 155,218 156,218 157,218 157,219 158,219 159,219 160,219 160,220 161,220 162,220 163,220 163,221 164,221 165,221 165,222 166,222 167,222 168,222 169,222 170,222 171,222 172,222 172,221 173,221 174,221 175,221 176,221 177,221 177,222 178,222 179,222 180,222 181,222 181,223 182,223 183,223 183,224 184,224 185,224 185,225 186,225 187,225 188,225 188,226 189,226 190,226 191,226 192,226 193,226 194,226 195,226 196,226 197,226 197,225 198,225 199,225 200,225 201,225 202,225 202,226 203,226 204,226 205,226 206,226 207,226 208,226 209,226 210,226 211,226 212,226 213,226 213,227 214,227 214,228 215,228 215,230 216,230 217,230 218,230 219,230 220,230 221,230 222,230 223,230 223,231 224,231 225,231 225,232 226,232 226,231 227,231 228,231 229,231 229,230 230,230 231,230 232,230 233,230 234,230 235,230 236,230 237,230 237,231 238,231 239,231 240,231 241,231 242,231 242,232 243,232 244,232 245,232 245,233 246,233 246,234 247,234 248,234 248,235 249,235 250,235 251,235 252,235 252,236 253,236 254,236 255,236 256,236 257,236 258,236 259,236 260,236 261,236 261,235 262,235 263,235 263,234 264,234 264,233 265,233 265,234 266,234 266,235 267,235 268,235 269,235 270,235 271,235 272,235 273,235 274,235 275,235 276,235 276,236 277,236 278,236 279,236 280,236 281,236 281,237 282,237 282,238 283,238 284,238 284,239 285,239 286,239 287,239 287,240 288,240 289,240 290,240 291,240 292,240 293,240 294,240 295,240 296,240 297,240 298,240 298,241 299,241 300,241 300,240 301,240 302,240 302,239 303,239 304,239 305,239 306,239 307,239 308,239 308,240 309,240 310,240 311,240 312,240 313,240 314,240 315,240 316,240 317,240 318,240 319,240 320,240 320,241 321,241 322,241 323,241 324,241 325,241 326,241 326,242 327,242 327,243 328,243 328,244 329,244 330,244 331,244 332,244 333,244 334,244 335,244 335,245 336,245 337,245 338,245 339,245 340,245 341,245 342,245 343,245 344,245 345,245 346,245 347,245 348,245 349,245 349,244 350,244 351,244 352,244 353,244 354,244 355,244 356,244 357,244 358,244 359,244 360,244 361,244 362,244 362,245 363,245 364,245 365,245 366,245 367,245 368,245 369,245 370,245 370,246 371,246 372,246 372,247 373,247 374,247 374,248 375,248 376,248 376,249 377,249 378,249 379,249 380,249 381,249 382,249 383,249 384,249 384,250 385,250 386,250 387,250 388,250 389,250 390,250 391,250 391,249 392,249 393,249 394,249 395,249 396,249 397,249 398,249 398,248 399,248 400,248 401,248 402,248 403,248 404,248 404,249 405,249 406,249 407,249 408,249 409,249 410,249 411,249 411,250 412,250 413,250 414,250 415,250 416,250 417,250 418,250 419,250 420,250 421,250 422,250 423,250 424,250 425,250 426,250 426,251 427,251 428,251 428,252 429,252 429,253 430,253 431,253 432,253 433,253 434,253 435,253 435,254 436,254 437,254 438,254 439,254 440,254 441,254 442,254 443,254 444,254 445,254 446,254 447,254 448,254 449,254 450,254 450,255 451,255 452,255 453,255 453,254 454,254 455,254 456,254 456,253 457,253 458,253 459,253 460,253 461,253 462,253 463,253 464,253 465,253 465,254 466,254 467,254 468,254 469,254 470,254 471,254 472,254 473,254 473,253 474,253 475,253 475,254 476,254 477,254 477,255 478,255 479,255 479,254 480,254 480,253 481,253 482,253 482,252 483,252 483,251 484,251 484,250 485,250 486,250 486,249 487,249 488,249 489,249 490,249 491,249 492,249 493,249 493,248 494,248 494,247 495,247 495,246 496,246 496,245 497,245 498,245 498,244 499,244 500,244 500,243 501,243 501,242 502,242 502,241 503,241 503,240 504,240 504,239 505,239 505,238 506,238 506,237 507,237 507,236 508,236 509,236 509,235 510,235 510,234 511,234 511,233 512,233 512,232 513,232 513,231 514,231 514,230 515,230 516,230 516,229 517,229 517,228 518,228 518,227 519,227 519,226 520,226 521,226 521,225 522,225 522,224 523,224 523,223 524,223 525,223 525,222 526,222 527,222 527,221 528,221 529,221 530,221 531,221 531,220 532,220 532,219 533,219 534,219 534,218 535,218 535,217 536,217 537,217 537,216 538,216 539,216 539,215 540,215 541,215 541,214 542,214 542,213 543,213 543,212 544,212 545,212 545,211 546,211 546,210 547,210 547,209 548,209 548,208 549,208 549,207 550,207 550,206 551,206 551,205 552,205 552,203 553,203 553,202 554,202 554,201 555,201 555,200 556,200 556,199 557,199 557,198 558,198 558,197 559,197 559,196 560,196 560,195 561,195 561,194 562,194 563,194 563,193 564,193 565,193 566,193 567,193 567,192 568,192 569,192 569,191 570,191 570,190 571,190 571,189 572,189 573,189 574,189 574,188 575,188 576,188 577,188 578,188 579,188 580,188 580,189 581,189 582,189 583,189 584,189 585,189 586,189 587,189 588,189 589,189 590,189 590,188 591,188 592,188 593,188 594,188 595,188 596,188 597,188 598,188 599,188 600,188 601,188 602,188 603,188 603,189 604,189 605,189 605,190 606,190 606,191 607,191 608,191 608,192 609,192 609,193 610,193 611,193 612,193 613,193 614,193 615,193 616,193 617,193 618,193 619,193 619,194 620,194 621,194 622,194 622,195 623,195 624,195 624,196 625,196 626,196 626,197 627,197 628,197 629,197 630,197 631,197 631,198 632,198 633,198 634,198 635,198 635,199 636,199 637,199 637,200 638,200 638,201 639,201 640,201 640,202 641,202 642,202 643,202 643,203 644,203 645,203 646,203 647,203 648,203 649,203 649,204 650,204 650,205 651,205 651,206 652,206 652,207 653,207 654,207 655,207 656,207 657,207 658,207 659,207 660,207 660,208 661,208 661,209 662,209 663,209 663,210 664,210 664,211 665,211 666,211 667,211 668,211 669,211 670,211 671,211 672,211 672,212 673,212 674,212 674,213 675,213 676,213 676,214 677,214 677,215 678,215 679,215 679,216 680,216 681,216 682,216 683,216 684,216 685,216 686,216 687,216 687,217 688,217 688,218 689,218 689,219 690,219 690,220 691,220 691,221 692,221 693,221 694,221 695,221 696,221 697,221 698,221 699,221 700,221 701,221 701,222 702,222 703,222 703,223 704,223 704,224 705,224 706,224 706,225 707,225 707,226 708,226 709,226 710,226 710,225 711,225 712,225 713,225 714,225 715,225 715,226 716,226 717,226 717,227 718,227 719,227 720,227 720,228 721,228 722,228 722,229 723,229 724,229 725,229 726,229 727,229 727,230 728,230 729,230 730,230 731,230 732,230 732,231 733,231 734,231 734,232 735,232 736,232 737,232 737,233 738,233 739,233 739,234 740,234 741,234 741,235 742,235 743,235 744,235 745,235 746,235 747,235 748,235 749,235 750,235 751,235 752,235 752,236 753,236 754,236 754,237 755,237 756,237 756,238 757,238 758,238 758,239 759,239 760,239 761,239 762,239 762,240 763,240 764,240 765,240 766,240 766,240" fill="none" stroke="#000000" stroke-width="2" stroke-linejoin="miter" shape-rendering="crispEdges"/>
<polyline points="67,142 68,142 68,143 69,143 69,145 70,145 70,146 71,146 71,147 72,147 72,146 73,146 74,146 75,146 76,146 77,146 77,147 78,147 79,147 80,147 80,148 81,148 81,149 82,149 82,150 83,150 83,151 84,151 85,151 86,151 87,151 88,151 89,151 90,151 90,152 91,152 92,152 92,153 93,153 93,154 94,154 94,155 95,155 95,156 96,156 97,156 98,156 99,156 99,155 100,155 101,155 101,156 102,156 103,156 103,157 104,157 104,158 105,158 106,158 106,159 107,159 107,160 108,160 108,161 109,161 110,161 111,161 112,161 113,161 113,160 114,160 115,160 115,161 116,161 116,162 117,162 117,163 118,163 118,164 119,164 119,165 120,165 121,165 122,165 123,165 124,165 125,165 126,165 126,166 127,166 127,167 128,167 129,167 129,168 130,168 130,169 131,169 132,169 133,169 133,170 134,170 135,170 136,170 136,171 137,171 138,171 139,171 140,171 141,171 142,171 143,171 144,171 144,172 145,172 145,173 146,173 146,174 147,174 148,174 148,175 149,175 150,175 151,175 152,175 153,175 154,175 154,176 155,176 155,177 156,177 156,178 157,178 157,179 158,179 159,179 160,179 161,179 162,179 162,180 163,180 164,180 164,179 165,179 166,179 167,179 168,179 169,179 170,179 170,180 171,180 171,181 172,181 172,183 173,183 174,183 174,184 175,184 176,184 177,184 178,184 179,184 179,183 180,183 181,183 182,183 183,183 183,184 184,184 185,184 185,185 186,185 186,186 187,186 187,187 188,187 189,187 189,188 190,188 191,188 191,189 192,189 193,189 194,189 195,189 196,189 197,189 197,188 198,188 199,188 200,188 200,189 201,189 202,189 202,190 203,190 203,191 204,191 204,192 205,192 205,193 206,193 207,193 208,193 208,194 209,194 210,194 211,194 212,194 213,194 213,193 214,193 215,193 216,193 217,193 218,193 219,193 220,193 221,193 221,195 222,195 222,196 223,196 223,198 224,198 225,198 225,199 226,199 227,199 228,199 229,199 230,199 230,198 231,198 232,198 233,198 234,198 234,199 235,199 236,199 237,199 237,200 238,200 239,200 239,201 240,201 240,202 241,202 241,203 242,203 243,203 244,203 245,203 246,203 247,203 247,202 248,202 249,202 250,202 251,202 252,202 252,203 253,203 254,203 254,204 255,204 256,204 256,205 257,205 257,206 258,206 258,207 259,207 260,207 261,207 262,207 263,207 264,207 264,208 265,208 266,208 267,208 268,208 268,207 269,207 270,207 271,207 272,207 273,207 273,208 274,208 275,208 275,209 276,209 276,210 277,210 277,211 278,211 278,212 279,212 280,212 281,212 282,212 283,212 283,213 284,213 285,213 285,212 286,212 287,212 287,211 288,211 289,211 290,211 291,211 292,211 292,212 293,212 294,212 295,212 296,212 296,213 297,213 297,214 298,214 298,215 299,215 299,216 300,216 301,216 302,216 302,217 303,217 304,217 305,217 306,217 307,217 307,216 308,216 309,216 310,216 311,216 312,216 313,216 314,216 315,216 316,216 316,217 317,217 317,218 318,218 318,219 319,219 320,219 320,220 321,220 322,220 322,221 323,221 324,221 325,221 326,221 326,222 327,222 328,222 328,221 329,221 330,221 331,221 332,221 333,221 334,221 335,221 336,221 337,221 338,221 338,222 339,222 340,222 341,222 341,223 342,223 343,223 343,224 344,224 344,225 345,225 346,225 347,225 347,226 348,226 349,226 350,226 351,226 352,226 353,226 354,226 354,225 355,225 356,225 357,225 358,225 359,225 359,226 360,226 361,226 362,226 363,226 364,226 364,227 365,227 366,227 366,228 367,228 367,229 368,229 369,229 369,230 370,230 371,230 372,230 372,231 373,231 374,231 375,231 375,230 376,230 377,230 378,230 379,230 380,230 381,230 382,230 383,230 383,231 384,231 385,231 386,231 386,232 387,232 388,232 389,232 389,233 390,233 390,234 391,234 392,234 392,235 393,235 394,235 395,235 396,235 397,235 397,236 398,236 399,236 400,236 401,236 401,235 402,235 403,235 404,235 405,235 406,235 407,235 408,235 409,235 410,235 411,235 411,236 412,236 413,236 414,236 414,237 415,237 416,237 416,238 417,238 418,238 418,239 419,239 420,239 420,240 421,240 422,240 423,240 424,240 425,240 426,240 427,240 428,240 428,239 429,239 430,239 431,239 432,239 433,239 433,240 434,240 435,240 436,240 437,240 438,240 438,241 439,241 440,241 441,241 442,241 442,242 443,242 444,242 445,242 446,242 446,243 447,243 448,243 448,244 449,244 450,244 451,244 452,244 452,245 453,245 454,245 455,245 456,245 457,245 458,245 459,245 459,244 460,244 461,244 462,244 463,244 464,244 465,244 465,245 466,245 467,245 468,245 469,245 470,245 471,245 472,245 473,245 474,245 475,245 476,245 477,245 478,245 478,244 479,244 479,243 480,243 480,241 481,241 481,240 482,240 483,240 483,239 484,239 485,239 485,238 486,238 487,238 487,236 488,236 488,235 489,235 489,234 490,234 490,233 491,233 491,232 492,232 492,231 493,231 493,230 494,230 494,228 495,228 495,227 496,227 496,226 497,226 497,225 498,225 498,224 499,224 499,223 500,223 500,221 501,221 501,220 502,220 502,219 503,219 503,218 504,218 504,217 505,217 505,216 506,216 506,214 507,214 507,212 508,212 508,211 509,211 509,209 510,209 510,207 511,207 511,206 512,206 512,204 513,204 513,202 514,202 514,201 515,201 515,199 516,199 516,197 517,197 517,196 518,196 518,194 519,194 519,192 520,192 520,191 521,191 521,189 522,189 522,187 523,187 523,186 524,186 524,184 525,184 525,183 526,183 526,181 527,181 527,179 528,179 528,178 529,178 529,176 530,176 530,175 531,175 531,173 532,173 532,171 533,171 533,170 534,170 534,168 535,168 535,166 536,166 536,164 537,164 537,162 538,162 538,160 539,160 539,158 540,158 540,156 541,156 541,154 542,154 542,152 543,152 543,150 544,150 544,147 545,147 545,145 546,145 546,142 547,142 547,139 548,139 548,137 549,137 549,135 550,135 550,133 551,133 551,131 552,131 552,129 553,129 553,127 554,127 554,126 555,126 555,124 556,124 556,123 557,123 557,122 558,122 558,121 559,121 559,120 560,120 560,119 561,119 561,118 562,118 562,117 563,117 563,116 564,116 564,115 565,115 565,114 566,114 567,114 568,114 569,114 570,114 570,113 571,113 572,113 572,112 573,112 574,112 575,112 576,112 576,113 577,113 578,113 578,114 579,114 580,114 581,114 582,114 583,114 584,114 585,114 586,114 587,114 588,114 589,114 590,114 591,114 592,114 592,115 593,115 593,116 594,116 594,118 595,118 596,118 597,118 598,118 599,118 600,118 601,118 602,118 603,118 604,118 604,119 605,119 605,120 606,120 606,121 607,121 607,122 608,122 609,122 609,123 610,123 610,124 611,124 611,125 612,125 612,126 613,126 613,127 614,127 614,128 615,128 615,129 616,129 616,128 617,128 618,128 618,127 619,127 620,127 620,128 621,128 622,128 622,129 623,129 623,130 624,130 625,130 625,131 626,131 626,132 627,132 628,132 628,133 629,133 629,134 630,134 631,134 631,135 632,135 632,136 633,136 633,137 634,137 635,137 636,137 636,138 637,138 638,138 639,138 639,140 640,140 640,142 641,142 642,142 643,142 644,142 644,143 645,143 645,144 646,144 646,145 647,145 648,145 649,145 649,146 650,146 651,146 652,146 652,147 653,147 654,147 654,148 655,148 655,149 656,149 656,150 657,150 657,151 658,151 659,151 660,151 660,152 661,152 662,152 663,152 664,152 664,153 665,153 665,154 666,154 666,155 667,155 667,156 668,156 669,156 670,156 671,156 672,156 672,157 673,157 673,158 674,158 674,159 675,159 675,160 676,160 677,160 677,161 678,161 679,161 679,162 680,162 680,163 681,163 681,164 682,164 682,165 683,165 684,165 685,165 686,165 687,165 687,166 688,166 688,167 689,167 690,167 690,168 691,168 691,169 692,169 692,170 693,170 694,170 695,170 696,170 697,170 697,171 698,171 698,172 699,172 699,173 700,173 700,174 701,174 701,175 702,175 703,175 704,175 704,176 705,176 706,176 707,176 707,177 708,177 708,178 709,178 709,179 710,179 711,179 712,179 713,179 714,179 715,179 715,180 716,180 716,181 717,181 717,182 718,182 718,183 719,183 720,183 720,184 721,184 722,184 723,184 724,184 724,185 725,185 726,185 726,186 727,186 727,187 728,187 728,188 729,188 729,189 730,189 730,190 731,190 731,191 732,191 732,192 733,192 733,193 734,193 735,193 735,194 736,194 737,194 738,194 738,195 739,195 739,196 740,196 740,197 741,197 741,198 742,198 743,198 744,198 745,198 746,198 747,198 747,199 748,199 748,200 749,200 750,200 750,201 751,201 751,202 752,202 753,202 754,202 755,202 755,203 756,203 757,203 757,204 758,204 758,205 759,205 760,205 760,206 761,206 761,207 762,207 763,207 764,207 765,207 766,207 766,207" fill="none" stroke="#ffff00" stroke-width="2" stroke-linejoin="miter" shape-rendering="crispEdges"/>
<polyline points="67,100 68,100 69,100 70,100 70,101 71,101 72,101 72,102 73,102 73,103 74,103 75,103 75,104 76,104 76,105 77,105 78,105 79,105 80,105 81,105 82,105 83,105 84,105 84,104 85,104 86,104 86,103 87,103 88,103 88,104 89,104 89,105 90,105 90,106 91,106 92,106 92,107 93,107 93,108 94,108 94,109 95,109 96,109 97,109 97,110 98,110 99,110 100,110 100,109 101,109 102,109 103,109 104,109 105,109 106,109 107,109 107,110 108,110 109,110 110,110 110,111 111,111 111,112 112,112 113,112 113,113 114,113 114,114 115,114 116,114 117,114 118,114 118,115 119,115 119,114 120,114 121,114 122,114 123,114 124,114 125,114 125,115 126,115 126,116 127,116 127,117 128,117 128,118 129,118 130,118 130,119 131,119 132,119 133,119 134,119 135,119 135,118 136,118 137,118 138,118 139,118 139,119 140,119 140,120 141,120 142,120 142,121 143,121 143,122 144,122 145,122 145,123 146,123 146,124 147,124 148,124 148,123 149,123 150,123 151,123 152,123 152,124 153,124 154,124 154,125 155,125 155,126 156,126 156,127 157,127 158,127 159,127 159,128 160,128 161,128 161,129 162,129 163,129 163,128 164,128 165,128 166,128 167,128 168,128 169,128 170,128 170,130 171,130 171,131 172,131 172,132 173,132 173,133 174,133 175,133 176,133 177,133 178,133 178,132 179,132 180,132 180,133 181,133 182,133 183,133 183,134 184,134 184,135 185,135 186,135 186,136 187,136 188,136 188,137 189,137 190,137 191,137 192,137 193,137 194,137 195,137 196,137 196,138 197,138 198,138 198,139 199,139 200,139 200,140 201,140 202,140 202,141 203,141 203,142 204,142 205,142 206,142 207,142 208,142 209,142 210,142 211,142 212,142 213,142 213,143 214,143 215,143 215,144 216,144 216,145 217,145 217,146 218,146 219,146 220,146 221,146 221,147 222,147 223,147 223,146 224,146 225,146 226,146 226,147 227,147 227,148 228,148 229,148 229,149 230,149 230,150 231,150 231,152 232,152 233,152 234,152 234,151 235,151 236,151 237,151 238,151 239,151 240,151 240,152 241,152 242,152 243,152 243,153 244,153 245,153 245,154 246,154 246,155 247,155 248,155 249,155 250,155 251,155 252,155 253,155 253,156 254,156 255,156 255,157 256,157 256,158 257,158 257,159 258,159 258,160 259,160 259,161 260,161 261,161 262,161 263,161 264,161 265,161 265,160 266,160 267,160 268,160 269,160 270,160 271,160 271,161 272,161 272,162 273,162 273,164 274,164 275,164 276,164 276,165 277,165 278,165 279,165 280,165 281,165 282,165 282,166 283,166 283,167 284,167 285,167 285,168 286,168 287,168 287,169 288,169 289,169 290,169 291,169 291,170 292,170 293,170 294,170 295,170 295,169 296,169 297,169 298,169 298,170 299,170 299,171 300,171 300,172 301,172 301,173 302,173 302,174 303,174 304,174 305,174 306,174 307,174 307,175 308,175 309,175 310,175 310,174 311,174 312,174 313,174 314,174 314,175 315,175 316,175 316,176 317,176 317,177 318,177 318,178 319,178 320,178 320,179 321,179 322,179 323,179 323,180 324,180 325,180 325,179 326,179 327,179 328,179 329,179 329,180 330,180 330,181 331,181 331,182 332,182 332,183 333,183 333,184 334,184 335,184 336,184 337,184 338,184 338,185 339,185 340,185 340,184 341,184 342,184 343,184 344,184 345,184 345,185 346,185 346,186 347,186 347,187 348,187 348,188 349,188 350,188 351,188 352,188 353,188 354,188 355,188 356,188 357,188 358,188 358,189 359,189 360,189 361,189 361,190 362,190 362,191 363,191 364,191 364,192 365,192 365,193 366,193 367,193 368,193 369,193 370,193 371,193 371,194 372,194 372,195 373,195 374,195 374,196 375,196 375,197 376,197 376,198 377,198 378,198 379,198 380,198 381,198 382,198 382,197 383,197 383,198 384,198 384,199 385,199 386,199 386,200 387,200 388,200 388,201 389,201 389,202 390,202 391,202 392,202 393,202 394,202 395,202 396,202 397,202 398,202 399,202 400,202 400,203 401,203 402,203 402,204 403,204 403,205 404,205 405,205 405,206 406,206 406,207 407,207 408,207 409,207 410,207 411,207 412,207 413,207 414,207 414,208 415,208 416,208 416,209 417,209 418,209 418,210 419,210 419,211 420,211 421,211 421,212 422,212 423,212 424,212 425,212 426,212 427,212 428,212 429,212 429,213 430,213 431,213 431,214 432,214 432,215 433,215 434,215 434,216 435,216 435,217 436,217 437,217 438,217 439,217 440,217 440,216 441,216 442,216 442,217 443,217 444,217 444,218 445,218 446,218 446,219 447,219 447,220 448,220 449,220 449,221 450,221 451,221 452,221 453,221 454,221 455,221 456,221 457,221 457,222 458,222 459,222 459,223 460,223 460,224 461,224 461,225 462,225 463,225 463,226 464,226 465,226 466,226 467,226 467,227 468,227 469,227 469,226 470,226 470,225 471,225 471,224 472,224 473,224 473,223 474,223 474,222 475,222 475,221 476,221 476,220 477,220 477,219 478,219 479,219 479,218 480,218 480,217 481,217 481,216 482,216 482,214 483,214 483,213 484,213 484,212 485,212 485,211 486,211 486,210 487,210 487,209 488,209 488,207 489,207 489,206 490,206 490,204 491,204 491,202 492,202 492,201 493,201 493,199 494,199 494,197 495,197 495,196 496,196 496,192 497,192 497,189 498,189 498,185 499,185 499,182 500,182 500,178 501,178 501,174 502,174 502,169 503,169 503,165 504,165 504,160 505,160 505,156 506,156 506,147 507,147 507,138 508,138 508,130 509,130 509,126 510,126 510,122 511,122 511,119 512,119 512,115 513,115 513,111 514,111 514,108 515,108 515,104 516,104 516,101 517,101 517,100 518,100 518,98 519,98 519,96 520,96 520,94 521,94 521,92 522,92 522,90 523,90 523,88 524,88 524,86 525,86 525,85 526,85 526,84 527,84 527,83 528,83 528,82 529,82 529,81 530,81 531,81 531,80 532,80 532,79 533,79 534,79 534,78 535,78 535,77 536,77 537,77 537,75 538,75 538,74 539,74 539,72 540,72 541,72 541,71 542,71 543,71 543,70 544,70 545,70 545,69 546,69 546,68 547,68 548,68 548,67 549,67 550,67 551,67 552,67 552,66 553,66 554,66 554,65 555,65 555,64 556,64 556,63 557,63 558,63 559,63 559,62 560,62 561,62 562,62 563,62 563,63 564,63 565,63 565,64 566,64 567,64 568,64 568,63 569,63 570,63 571,63 572,63 573,63 574,63 575,63 576,63 577,63 578,63 579,63 580,63 581,63 582,63 583,63 584,63 585,63 586,63 587,63 587,62 588,62 589,62 590,62 591,62 592,62 593,62 594,62 595,62 596,62 596,63 597,63 598,63 598,64 599,64 600,64 601,64 601,65 602,65 603,65 603,66 604,66 605,66 605,67 606,67 607,67 608,67 609,67 610,67 610,68 611,68 612,68 613,68 614,68 615,68 616,68 617,68 618,68 619,68 620,68 620,69 621,69 621,70 622,70 623,70 623,71 624,71 625,71 625,72 626,72 627,72 628,72 629,72 629,73 630,73 631,73 632,73 632,74 633,74 634,74 634,75 635,75 636,75 636,76 637,76 637,77 638,77 638,76 639,76 640,76 641,76 642,76 643,76 643,77 644,77 645,77 645,79 646,79 647,79 647,80 648,80 649,80 649,81 650,81 651,81 651,82 652,82 653,82 654,82 655,82 655,83 656,83 657,83 657,84 658,84 658,86 659,86 660,86 661,86 662,86 663,86 664,86 665,86 666,86 666,87 667,87 667,88 668,88 668,89 669,89 669,90 670,90 671,90 672,90 672,91 673,91 674,91 675,91 675,92 676,92 676,93 677,93 677,94 678,94 678,95 679,95 680,95 681,95 682,95 683,95 683,96 684,96 684,97 685,97 685,98 686,98 686,99 687,99 688,99 689,99 690,99 691,99 692,99 692,101 693,101 693,102 694,102 694,103 695,103 695,104 696,104 697,104 698,104 699,104 700,104 701,104 701,106 702,106 702,107 703,107 703,108 704,108 704,109 705,109 706,109 706,110 707,110 708,110 708,111 709,111 710,111 710,112 711,112 711,113 712,113 713,113 713,114 714,114 714,115 715,115 716,115 716,116 717,116 717,117 718,117 719,117 719,118 720,118 720,119 721,119 722,119 723,119 724,119 725,119 726,119 726,121 727,121 727,123 728,123 728,125 729,125 729,126 730,126 730,128 731,128 731,130 732,130 732,132 733,132 733,134 734,134 734,136 735,136 736,136 737,136 737,137 738,137 739,137 740,137 740,138 741,138 741,139 742,139 742,141 743,141 743,142 744,142 745,142 745,143 746,143 747,143 748,143 748,144 749,144 750,144 750,145 751,145 751,146 752,146 753,146 753,147 754,147 754,148 755,148 756,148 756,149 757,149 757,150 758,150 759,150 759,151 760,151 761,151 762,151 762,152 763,152 764,152 765,152 766,152 766,153 766,153" fill="none" stroke="#ff00ff" stroke-width="2" stroke-linejoin="miter" shape-rendering="crispEdges"/>
<polyline points="67,82 68,82 69,82 70,82 70,83 71,83 72,83 72,84 73,84 73,85 74,85 75,85 76,85 77,85 77,86 78,86 79,86 80,86 81,86 82,86 82,87 83,87 83,86 84,86 85,86 86,86 86,85 87,85 88,85 89,85 90,85 91,85 91,86 92,86 93,86 94,86 95,86 96,86 97,86 98,86 98,87 99,87 100,87 101,87 101,88 102,88 103,88 104,88 104,89 105,89 106,89 106,90 107,90 108,90 109,90 110,90 111,90 112,90 113,90 114,90 115,90 116,90 117,90 117,91 118,91 119,91 120,91 120,92 121,92 121,91 122,91 123,91 123,90 124,90 125,90 126,90 127,90 128,90 129,90 130,90 131,90 132,90 133,90 133,91 134,91 135,91 136,91 137,91 138,91 138,92 139,92 140,92 141,92 142,92 142,93 143,93 144,93 144,94 145,94 145,95 146,95 147,95 148,95 149,95 150,95 151,95 152,95 153,95 154,95 155,95 155,94 156,94 157,94 158,94 159,94 160,94 161,94 161,95 162,95 163,95 164,95 165,95 166,95 166,96 167,96 168,96 169,96 170,96 171,96 171,97 172,97 172,98 173,98 173,99 174,99 174,100 175,100 176,100 177,100 178,100 178,101 179,101 180,101 181,101 182,101 183,101 183,100 184,100 185,100 185,99 186,99 187,99 188,99 189,99 190,99 190,100 191,100 192,100 193,100 194,100 194,101 195,101 196,101 196,102 197,102 197,103 198,103 198,104 199,104 200,104 201,104 202,104 202,105 203,105 204,105 205,105 206,105 207,105 208,105 209,105 209,104 210,104 211,104 212,104 213,104 214,104 215,104 216,104 217,104 217,105 218,105 219,105 219,106 220,106 221,106 221,107 222,107 222,108 223,108 224,108 224,109 225,109 226,109 226,110 227,110 228,110 229,110 230,110 231,110 231,109 232,109 233,109 234,109 235,109 236,109 237,109 237,110 238,110 239,110 240,110 240,111 241,111 241,112 242,112 242,113 243,113 244,113 245,113 246,113 247,113 247,114 248,114 249,114 249,113 250,113 251,113 252,113 253,113 253,114 254,114 255,114 255,115 256,115 256,116 257,116 258,116 258,117 259,117 260,117 260,118 261,118 262,118 262,119 263,119 264,119 265,119 266,119 266,118 267,118 268,118 269,118 270,118 271,118 272,118 272,119 273,119 274,119 275,119 276,119 276,121 277,121 277,122 278,122 278,123 279,123 280,123 281,123 281,124 282,124 283,124 284,124 285,124 285,123 286,123 286,122 287,122 288,122 289,122 289,123 290,123 291,123 292,123 292,124 293,124 294,124 295,124 295,125 296,125 296,126 297,126 297,127 298,127 298,128 299,128 300,128 301,128 302,128 303,128 304,128 305,128 306,128 307,128 308,128 308,129 309,129 310,129 310,130 311,130 311,131 312,131 313,131 313,132 314,132 315,132 315,133 316,133 317,133 317,134 318,134 318,133 319,133 320,133 320,132 321,132 322,132 323,132 323,133 324,133 325,133 325,134 326,134 326,135 327,135 327,136 328,136 328,137 329,137 329,138 330,138 331,138 332,138 332,137 333,137 334,137 335,137 336,137 337,137 338,137 338,138 339,138 340,138 340,139 341,139 341,140 342,140 342,141 343,141 343,142 344,142 344,141 345,141 346,141 347,141 348,141 349,141 350,141 350,142 351,142 352,142 352,143 353,143 354,143 354,144 355,144 355,145 356,145 356,146 357,146 358,146 358,147 359,147 360,147 360,148 361,148 361,147 362,147 363,147 364,147 365,147 365,146 366,146 366,147 367,147 367,148 368,148 368,149 369,149 370,149 370,150 371,150 371,151 372,151 373,151 374,151 375,151 376,151 377,151 378,151 378,152 379,152 379,153 380,153 380,154 381,154 382,154 382,155 383,155 383,156 384,156 385,156 386,156 387,156 388,156 389,156 390,156 390,157 391,157 391,158 392,158 392,159 393,159 394,159 394,160 395,160 395,161 396,161 397,161 398,161 399,161 400,161 400,160 401,160 401,161 402,161 403,161 403,162 404,162 404,163 405,163 405,164 406,164 407,164 407,165 408,165 409,165 410,165 411,165 412,165 413,165 414,165 415,165 415,166 416,166 416,167 417,167 417,168 418,168 418,169 419,169 420,169 420,170 421,170 422,170 423,170 424,170 425,170 425,172 426,172 426,173 427,173 427,174 428,174 428,175 429,175 430,175 431,175 432,175 433,175 434,175 434,176 435,176 435,177 436,177 436,178 437,178 437,179 438,179 438,180 439,180 440,180 441,180 442,180 443,180 444,180 445,180 446,180 446,181 447,181 447,182 448,182 449,182 449,183 450,183 451,183 452,183 453,183 454,183 455,183 455,184 456,184 456,185 457,185 457,186 458,186 458,187 459,187 459,188 460,188 460,189 461,189 462,189 463,189 463,188 464,188 465,188 465,189 466,189 466,190 467,190 467,191 468,191 468,192 469,192 469,193 470,193 470,192 471,192 471,191 472,191 472,190 473,190 473,189 474,189 474,188 475,188 475,187 476,187 476,185 477,185 477,181 478,181 478,174 479,174 479,169 480,169 480,164 481,164 481,158 482,158 482,152 483,152 483,145 484,145 484,136 485,136 485,127 486,127 486,122 487,122 487,117 488,117 488,113 489,113 489,108 490,108 490,102 491,102 491,96 492,96 492,90 493,90 493,87 494,87 494,83 495,83 495,81 496,81 496,79 497,79 497,77 498,77 498,75 499,75 499,73 500,73 500,72 501,72 501,70 502,70 502,69 503,69 503,67 504,67 504,66 505,66 505,65 506,65 506,63 507,63 508,63 508,62 509,62 510,62 510,61 511,61 511,60 512,60 513,60 513,59 514,59 514,58 515,58 516,58 516,57 517,57 518,57 518,56 519,56 520,56 521,56 521,55 522,55 523,55 524,55 525,55 526,55 526,54 527,54 528,54 529,54 530,54 531,54 532,54 533,54 534,54 535,54 536,54 536,50 537,50 538,50 538,49 539,49 540,49 540,48 541,48 542,48 543,48 543,47 544,47 544,48 545,48 546,48 547,48 547,49 548,49 548,48 549,48 550,48 551,48 552,48 553,48 554,48 555,48 556,48 557,48 558,48 559,48 560,48 561,48 562,48 563,48 564,48 564,47 565,47 566,47 567,47 568,47 568,46 569,46 570,46 571,46 572,46 573,46 574,46 575,46 575,47 576,47 576,48 577,48 578,48 579,48 580,48 581,48 582,48 583,48 584,48 585,48 586,48 587,48 587,49 588,49 589,49 590,49 591,49 591,50 592,50 593,50 594,50 595,50 596,50 597,50 598,50 599,50 600,50 601,50 602,50 603,50 603,49 604,49 604,48 605,48 606,48 607,48 608,48 609,48 610,48 611,48 612,48 613,48 614,48 615,48 615,49 616,49 617,49 618,49 618,50 619,50 620,50 621,50 621,51 622,51 623,51 624,51 624,52 625,52 626,52 627,52 628,52 629,52 630,52 631,52 632,52 633,52 633,53 634,53 635,53 636,53 637,53 638,53 639,53 640,53 641,53 642,53 643,53 644,53 645,53 646,53 647,53 648,53 649,53 650,53 650,54 651,54 652,54 653,54 654,54 654,55 655,55 656,55 657,55 658,55 658,56 659,56 660,56 660,57 661,57 662,57 663,57 664,57 664,58 665,58 666,58 667,58 668,58 669,58 669,59 670,59 671,59 671,58 672,58 672,57 673,57 674,57 675,57 676,57 677,57 677,58 678,58 679,58 680,58 680,59 681,59 682,59 682,60 683,60 684,60 684,61 685,61 685,62 686,62 687,62 688,62 688,63 689,63 690,63 691,63 692,63 693,63 694,63 694,62 695,62 696,62 697,62 697,61 698,61 698,62 699,62 700,62 700,63 701,63 702,63 702,64 703,64 703,66 704,66 704,67 705,67 706,67 707,67 707,68 708,68 709,68 710,68 711,68 712,68 713,68 713,67 714,67 715,67 715,68 716,68 717,68 717,69 718,69 718,70 719,70 720,70 720,71 721,71 722,71 723,71 723,72 724,72 725,72 726,72 727,72 727,73 728,73 728,77 729,77 729,81 730,81 730,85 731,85 731,89 732,89 732,92 733,92 733,95 734,95 734,96 735,96 735,97 736,97 737,97 737,98 738,98 738,99 739,99 740,99 740,100 741,100 742,100 743,100 743,101 744,101 745,101 745,102 746,102 747,102 747,103 748,103 748,104 749,104 750,104 750,105 751,105 752,105 753,105 754,105 755,105 755,106 756,106 756,107 757,107 757,108 758,108 759,108 759,109 760,109 761,109 762,109 763,109 764,109 765,109 766,109 766,110 766,110" fill="none" stroke="#00ffff" stroke-width="2" stroke-linejoin="miter" shape-rendering="crispEdges"/>
<polyline points="67,54 82,54 82,52 84,52 84,53 96,53 96,54 108,54 108,56 113,56 113,58 131,58 131,59 136,59 136,56 144,56 144,58 154,58 154,59 163,59 163,62 174,62 174,63 185,63 185,64 187,64 187,62 200,62 200,63 209,63 209,65 214,65 214,66 217,66 217,67 228,67 228,68 239,68 239,67 251,67 251,68 260,68 260,70 266,70 266,71 271,71 271,72 276,72 276,73 284,73 284,71 289,71 289,72 295,72 295,73 301,73 301,75 304,75 304,76 310,76 310,77 319,77 319,78 321,78 321,76 331,76 331,77 338,77 338,79 341,79 341,81 370,81 370,83 374,83 374,86 384,86 384,85 390,85 390,86 396,86 396,88 400,88 400,90 406,90 406,92 409,92 409,90 416,90 416,92 421,92 421,95 426,95 426,96 432,96 432,95 439,95 439,97 444,97 444,100 454,100 454,99 459,99 459,102 463,102 463,103 466,103 466,104 471,104 471,101 474,101 474,93 476,93 476,82 479,82 479,76 482,76 482,72 484,72 484,67 488,67 488,63 496,63 496,60 502,60 502,55 507,55 507,50 515,50 515,46 521,46 521,44 525,44 525,45 535,45 535,44 545,44 545,40 558,40 558,39 566,39 566,40 592,40 592,41 606,41 606,43 615,43 615,42 624,42 624,44 650,44 650,45 670,45 670,43 680,43 680,45 712,45 712,46 715,46 715,48 725,48 725,49 727,49 727,50 730,50 730,52 732,52 732,58 735,58 735,59 744,59 744,56 748,56 748,58 762,58 762,61 766,61" fill="none" stroke="#0000ff" stroke-width="2" stroke-linejoin="miter" shape-rendering="crispEdges"/>
<polyline points="67,44 82,44 82,45 104,45 104,43 120,43 120,44 142,44 142,45 163,45 163,48 186,48 186,49 204,49 204,50 215,50 215,48 235,48 235,49 253,49 253,50 261,50 261,52 268,52 268,53 284,53 284,54 306,54 306,53 309,53 309,52 311,52 311,53 328,53 328,54 349,54 349,57 359,57 359,58 375,58 375,59 390,59 390,57 399,57 399,58 411,58 411,59 426,59 426,62 441,62 441,63 454,63 454,64 460,64 460,62 476,62 476,66 479,66 479,67 484,67 484,64 486,64 486,62 492,62 492,60 495,60 495,58 500,58 500,55 503,55 503,53 506,53 506,49 512,49 512,45 517,45 517,43 524,43 524,45 535,45 535,44 545,44 545,40 592,40 592,43 614,43 614,44 650,44 650,45 681,45 681,43 703,43 703,44 729,44 729,47 732,47 732,49 752,49 752,50 766,50" fill="none" stroke="#00ff00" stroke-width="2" stroke-linejoin="miter" shape-rendering="crispEdges"/>
<polyline points="67,53 85,53 85,54 110,54 110,52 116,52 116,53 136,53 136,54 163,54 163,56 166,56 166,57 177,57 177,58 197,58 197,59 218,59 218,57 231,57 231,58 253,58 253,59 270,59 270,60 275,60 275,62 292,62 292,63 312,63 312,64 325,64 325,62 345,62 345,63 361,63 361,64 373,64 373,66 378,66 378,67 396,67 396,68 421,68 421,67 424,67 424,66 442,66 442,68 464,68 464,69 466,69 466,70 476,70 476,72 491,72 491,69 495,69 495,66 500,66 500,62 506,62 506,58 515,58 515,54 521,54 521,53 535,53 535,54 546,54 546,53 551,53 551,52 568,52 568,53 612,53 612,54 658,54 658,52 669,52 669,53 702,53 702,54 731,54 731,57 737,57 737,58 758,58 758,59 766,59" fill="none" stroke="#ff0000" stroke-width="2" stroke-linejoin="miter" shape-rendering="crispEdges"/>
<line x1="65" y1="356.5" x2="67" y2="356.5" stroke="rgba(122,122,122,0.36)" stroke-width="1"/>
<line x1="66" y1="356.5" x2="767" y2="356.5" stroke="rgba(122,122,122,0.36)" stroke-width="1" stroke-dasharray="1 1"/>
<line x1="767" y1="356.5" x2="769" y2="356.5" stroke="rgba(122,122,122,0.36)" stroke-width="1"/>
<line x1="65" y1="346.5" x2="67" y2="346.5" stroke="rgba(122,122,122,0.36)" stroke-width="1"/>
<line x1="66" y1="346.5" x2="767" y2="346.5" stroke="rgba(122,122,122,0.36)" stroke-width="1" stroke-dasharray="1 1"/>
<line x1="767" y1="346.5" x2="769" y2="346.5" stroke="rgba(122,122,122,0.36)" stroke-width="1"/>
<line x1="65" y1="337.5" x2="67" y2="337.5" stroke="rgba(122,122,122,0.36)" stroke-width="1"/>
<line x1="66" y1="337.5" x2="767" y2="337.5" stroke="rgba(122,122,122,0.36)" stroke-width="1" stroke-dasharray="1 1"/>
<line x1="767" y1="337.5" x2="769" y2="337.5" stroke="rgba(122,122,122,0.36)" stroke-width="1"/>
<line x1="65" y1="328.5" x2="67" y2="328.5" stroke="rgba(122,122,122,0.36)" stroke-width="1"/>
<line x1="66" y1="328.5" x2="767" y2="328.5" stroke="rgba(122,122,122,0.36)" stroke-width="1" stroke-dasharray="1 1"/>
<line x1="767" y1="328.5" x2="769" y2="328.5" stroke="rgba(122,122,122,0.36)" stroke-width="1"/>
<line x1="65" y1="318.5" x2="67" y2="318.5" stroke="rgba(222,79,79,0.45)" stroke-width="1"/>
<line x1="67" y1="318.5" x2="767" y2="318.5" stroke="rgba(222,79,79,0.45)" stroke-width="1" stroke-dasharray="1 1"/>
<line x1="767" y1="318.5" x2="769" y2="318.5" stroke="rgba(222,79,79,0.45)" stroke-width="1"/>
<line x1="65" y1="309.5" x2="67" y2="309.5" stroke="rgba(122,122,122,0.36)" stroke-width="1"/>
<line x1="66" y1="309.5" x2="767" y2="309.5" stroke="rgba(122,122,122,0.36)" stroke-width="1" stroke-dasharray="1 1"/>
<line x1="767" y1="309.5" x2="769" y2="309.5" stroke="rgba(122,122,122,0.36)" stroke-width="1"/>
<line x1="65" y1="300.5" x2="67" y2="300.5" stroke="rgba(122,122,122,0.36)" stroke-width="1"/>
<line x1="66" y1="300.5" x2="767" y2="300.5" stroke="rgba(122,122,122,0.36)" stroke-width="1" stroke-dasharray="1 1"/>
<line x1="767" y1="300.5" x2="769" y2="300.5" stroke="rgba(122,122,122,0.36)" stroke-width="1"/>
<line x1="65" y1="290.5" x2="67" y2="290.5" stroke="rgba(122,122,122,0.36)" stroke-width="1"/>
<line x1="66" y1="290.5" x2="767" y2="290.5" stroke="rgba(122,122,122,0.36)" stroke-width="1" stroke-dasharray="1 1"/>
<line x1="767" y1="290.5" x2="769" y2="290.5" stroke="rgba(122,122,122,0.36)" stroke-width="1"/>
<line x1="65" y1="281.5" x2="67" y2="281.5" stroke="rgba(122,122,122,0.36)" stroke-width="1"/>
<line x1="66" y1="281.5" x2="767" y2="281.5" stroke="rgba(122,122,122,0.36)" stroke-width="1" stroke-dasharray="1 1"/>
<line x1="767" y1="281.5" x2="769" y2="281.5" stroke="rgba(122,122,122,0.36)" stroke-width="1"/>
<line x1="65" y1="272.5" x2="67" y2="272.5" stroke="rgba(222,79,79,0.45)" stroke-width="1"/>
<line x1="67" y1="272.5" x2="767" y2="272.5" stroke="rgba(222,79,79,0.45)" stroke-width="1" stroke-dasharray="1 1"/>
<line x1="767" y1="272.5" x2="769" y2="272.5" stroke="rgba(222,79,79,0.45)" stroke-width="1"/>
<line x1="65" y1="262.5" x2="67" y2="262.5" stroke="rgba(122,122,122,0.36)" stroke-width="1"/>
<line x1="66" y1="262.5" x2="767" y2="262.5" stroke="rgba(122,122,122,0.36)" stroke-width="1" stroke-dasharray="1 1"/>
<line x1="767" y1="262.5" x2="769" y2="262.5" stroke="rgba(122,122,122,0.36)" stroke-width="1"/>
<line x1="65" y1="253.5" x2="67" y2="253.5" stroke="rgba(122,122,122,0.36)" stroke-width="1"/>
<line x1="66" y1="253.5" x2="767" y2="253.5" stroke="rgba(122,122,122,0.36)" stroke-width="1" stroke-dasharray="1 1"/>
<line x1="767" y1="253.5" x2="769" y2="253.5" stroke="rgba(122,122,122,0.36)" stroke-width="1"/>
<line x1="65" y1="244.5" x2="67" y2="244.5" stroke="rgba(122,122,122,0.36)" stroke-width="1"/>
<line x1="66" y1="244.5" x2="767" y2="244.5" stroke="rgba(122,122,122,0.36)" stroke-width="1" stroke-dasharray="1 1"/>
<line x1="767" y1="244.5" x2="769" y2="244.5" stroke="rgba(122,122,122,0.36)" stroke-width="1"/>
<line x1="65" y1="234.5" x2="67" y2="234.5" stroke="rgba(122,122,122,0.36)" stroke-width="1"/>
<line x1="66" y1="234.5" x2="767" y2="234.5" stroke="rgba(122,122,122,0.36)" stroke-width="1" stroke-dasharray="1 1"/>
<line x1="767" y1="234.5" x2="769" y2="234.5" stroke="rgba(122,122,122,0.36)" stroke-width="1"/>
<line x1="65" y1="225.5" x2="67" y2="225.5" stroke="rgba(222,79,79,0.45)" stroke-width="1"/>
<line x1="67" y1="225.5" x2="767" y2="225.5" stroke="rgba(222,79,79,0.45)" stroke-width="1" stroke-dasharray="1 1"/>
<line x1="767" y1="225.5" x2="769" y2="225.5" stroke="rgba(222,79,79,0.45)" stroke-width="1"/>
<line x1="65" y1="216.5" x2="67" y2="216.5" stroke="rgba(122,122,122,0.36)" stroke-width="1"/>
<line x1="66" y1="216.5" x2="767" y2="216.5" stroke="rgba(122,122,122,0.36)" stroke-width="1" stroke-dasharray="1 1"/>
<line x1="767" y1="216.5" x2="769" y2="216.5" stroke="rgba(122,122,122,0.36)" stroke-width="1"/>
<line x1="65" y1="206.5" x2="67" y2="206.5" stroke="rgba(122,122,122,0.36)" stroke-width="1"/>
<line x1="66" y1="206.5" x2="767" y2="206.5" stroke="rgba(122,122,122,0.36)" stroke-width="1" stroke-dasharray="1 1"/>
<line x1="767" y1="206.5" x2="769" y2="206.5" stroke="rgba(122,122,122,0.36)" stroke-width="1"/>
<line x1="65" y1="197.5" x2="67" y2="197.5" stroke="rgba(122,122,122,0.36)" stroke-width="1"/>
<line x1="66" y1="197.5" x2="767" y2="197.5" stroke="rgba(122,122,122,0.36)" stroke-width="1" stroke-dasharray="1 1"/>
<line x1="767" y1="197.5" x2="769" y2="197.5" stroke="rgba(122,122,122,0.36)" stroke-width="1"/>
<line x1="65" y1="188.5" x2="67" y2="188.5" stroke="rgba(122,122,122,0.36)" stroke-width="1"/>
<line x1="66" y1="188.5" x2="767" y2="188.5" stroke="rgba(122,122,122,0.36)" stroke-width="1" stroke-dasharray="1 1"/>
<line x1="767" y1="188.5" x2="769" y2="188.5" stroke="rgba(122,122,122,0.36)" stroke-width="1"/>
<line x1="65" y1="178.5" x2="67" y2="178.5" stroke="rgba(222,79,79,0.45)" stroke-width="1"/>
<line x1="67" y1="178.5" x2="767" y2="178.5" stroke="rgba(222,79,79,0.45)" stroke-width="1" stroke-dasharray="1 1"/>
<line x1="767" y1="178.5" x2="769" y2="178.5" stroke="rgba(222,79,79,0.45)" stroke-width="1"/>
<line x1="65" y1="169.5" x2="67" y2="169.5" stroke="rgba(122,122,122,0.36)" stroke-width="1"/>
<line x1="66" y1="169.5" x2="767" y2="169.5" stroke="rgba(122,122,122,0.36)" stroke-width="1" stroke-dasharray="1 1"/>
<line x1="767" y1="169.5" x2="769" y2="169.5" stroke="rgba(122,122,122,0.36)" stroke-width="1"/>
<line x1="65" y1="160.5" x2="67" y2="160.5" stroke="rgba(122,122,122,0.36)" stroke-width="1"/>
<line x1="66" y1="160.5" x2="767" y2="160.5" stroke="rgba(122,122,122,0.36)" stroke-width="1" stroke-dasharray="1 1"/>
<line x1="767" y1="160.5" x2="769" y2="160.5" stroke="rgba(122,122,122,0.36)" stroke-width="1"/>
<line x1="65" y1="150.5" x2="67" y2="150.5" stroke="rgba(122,122,122,0.36)" stroke-width="1"/>
<line x1="66" y1="150.5" x2="767" y2="150.5" stroke="rgba(122,122,122,0.36)" stroke-width="1" stroke-dasharray="1 1"/>
<line x1="767" y1="150.5" x2="769" y2="150.5" stroke="rgba(122,122,122,0.36)" stroke-width="1"/>
<line x1="65" y1="141.5" x2="67" y2="141.5" stroke="rgba(122,122,122,0.36)" stroke-width="1"/>
<line x1="66" y1="141.5" x2="767" y2="141.5" stroke="rgba(122,122,122,0.36)" stroke-width="1" stroke-dasharray="1 1"/>
<line x1="767" y1="141.5" x2="769" y2="141.5" stroke="rgba(122,122,122,0.36)" stroke-width="1"/>
<line x1="65" y1="132.5" x2="67" y2="132.5" stroke="rgba(222,79,79,0.45)" stroke-width="1"/>
<line x1="67" y1="132.5" x2="767" y2="132.5" stroke="rgba(222,79,79,0.45)" stroke-width="1" stroke-dasharray="1 1"/>
<line x1="767" y1="132.5" x2="769" y2="132.5" stroke="rgba(222,79,79,0.45)" stroke-width="1"/>
<line x1="65" y1="122.5" x2="67" y2="122.5" stroke="rgba(122,122,122,0.36)" stroke-width="1"/>
<line x1="66" y1="122.5" x2="767" y2="122.5" stroke="rgba(122,122,122,0.36)" stroke-width="1" stroke-dasharray="1 1"/>
<line x1="767" y1="122.5" x2="769" y2="122.5" stroke="rgba(122,122,122,0.36)" stroke-width="1"/>
<line x1="65" y1="113.5" x2="67" y2="113.5" stroke="rgba(122,122,122,0.36)" stroke-width="1"/>
<line x1="66" y1="113.5" x2="767" y2="113.5" stroke="rgba(122,122,122,0.36)" stroke-width="1" stroke-dasharray="1 1"/>
<line x1="767" y1="113.5" x2="769" y2="113.5" stroke="rgba(122,122,122,0.36)" stroke-width="1"/>
<line x1="65" y1="104.5" x2="67" y2="104.5" stroke="rgba(122,122,122,0.36)" stroke-width="1"/>
<line x1="66" y1="104.5" x2="767" y2="104.5" stroke="rgba(122,122,122,0.36)" stroke-width="1" stroke-dasharray="1 1"/>
<line x1="767" y1="104.5" x2="769" y2="104.5" stroke="rgba(122,122,122,0.36)" stroke-width="1"/>
<line x1="65" y1="94.5" x2="67" y2="94.5" stroke="rgba(122,122,122,0.36)" stroke-width="1"/>
<line x1="66" y1="94.5" x2="767" y2="94.5" stroke="rgba(122,122,122,0.36)" stroke-width="1" stroke-dasharray="1 1"/>
<line x1="767" y1="94.5" x2="769" y2="94.5" stroke="rgba(122,122,122,0.36)" stroke-width="1"/>
<line x1="65" y1="85.5" x2="67" y2="85.5" stroke="rgba(222,79,79,0.45)" stroke-width="1"/>
<line x1="67" y1="85.5" x2="767" y2="85.5" stroke="rgba(222,79,79,0.45)" stroke-width="1" stroke-dasharray="1 1"/>
<line x1="767" y1="85.5" x2="769" y2="85.5" stroke="rgba(222,79,79,0.45)" stroke-width="1"/>
<line x1="65" y1="76.5" x2="67" y2="76.5" stroke="rgba(122,122,122,0.36)" stroke-width="1"/>
<line x1="66" y1="76.5" x2="767" y2="76.5" stroke="rgba(122,122,122,0.36)" stroke-width="1" stroke-dasharray="1 1"/>
<line x1="767" y1="76.5" x2="769" y2="76.5" stroke="rgba(122,122,122,0.36)" stroke-width="1"/>
<line x1="65" y1="66.5" x2="67" y2="66.5" stroke="rgba(122,122,122,0.36)" stroke-width="1"/>
<line x1="66" y1="66.5" x2="767" y2="66.5" stroke="rgba(122,122,122,0.36)" stroke-width="1" stroke-dasharray="1 1"/>
<line x1="767" y1="66.5" x2="769" y2="66.5" stroke="rgba(122,122,122,0.36)" stroke-width="1"/>
<line x1="65" y1="57.5" x2="67" y2="57.5" stroke="rgba(122,122,122,0.36)" stroke-width="1"/>
<line x1="66" y1="57.5" x2="767" y2="57.5" stroke="rgba(122,122,122,0.36)" stroke-width="1" stroke-dasharray="1 1"/>
<line x1="767" y1="57.5" x2="769" y2="57.5" stroke="rgba(122,122,122,0.36)" stroke-width="1"/>
<line x1="65" y1="48.5" x2="67" y2="48.5" stroke="rgba(122,122,122,0.36)" stroke-width="1"/>
<line x1="66" y1="48.5" x2="767" y2="48.5" stroke="rgba(122,122,122,0.36)" stroke-width="1" stroke-dasharray="1 1"/>
<line x1="767" y1="48.5" x2="769" y2="48.5" stroke="rgba(122,122,122,0.36)" stroke-width="1"/>
<line x1="65" y1="38.5" x2="67" y2="38.5" stroke="rgba(222,79,79,0.45)" stroke-width="1"/>
<line x1="67" y1="38.5" x2="767" y2="38.5" stroke="rgba(222,79,79,0.45)" stroke-width="1" stroke-dasharray="1 1"/>
<line x1="767" y1="38.5" x2="769" y2="38.5" stroke="rgba(222,79,79,0.45)" stroke-width="1"/>
<line x1="65" y1="29.5" x2="67" y2="29.5" stroke="rgba(122,122,122,0.36)" stroke-width="1"/>
<line x1="66" y1="29.5" x2="767" y2="29.5" stroke="rgba(122,122,122,0.36)" stroke-width="1" stroke-dasharray="1 1"/>
<line x1="767" y1="29.5" x2="769" y2="29.5" stroke="rgba(122,122,122,0.36)" stroke-width="1"/>
<line x1="65" y1="20.5" x2="67" y2="20.5" stroke="rgba(122,122,122,0.36)" stroke-width="1"/>
<line x1="66" y1="20.5" x2="767" y2="20.5" stroke="rgba(122,122,122,0.36)" stroke-width="1" stroke-dasharray="1 1"/>
<line x1="767" y1="20.5" x2="769" y2="20.5" stroke="rgba(122,122,122,0.36)" stroke-width="1"/>
<line x1="68.5" y1="365" x2="68.5" y2="368" stroke="rgba(222,79,79,0.45)" stroke-width="1"/>
<line x1="68.5" y1="15" x2="68.5" y2="365" stroke="rgba(222,79,79,0.45)" stroke-width="1" stroke-dasharray="1 1"/>
<line x1="68.5" y1="13" x2="68.5" y2="15" stroke="rgba(222,79,79,0.45)" stroke-width="1"/>
<line x1="83.5" y1="365" x2="83.5" y2="368" stroke="rgba(122,122,122,0.36)" stroke-width="1"/>
<line x1="83.5" y1="15" x2="83.5" y2="365" stroke="rgba(122,122,122,0.36)" stroke-width="1" stroke-dasharray="1 1"/>
<line x1="83.5" y1="13" x2="83.5" y2="15" stroke="rgba(122,122,122,0.36)" stroke-width="1"/>
<line x1="97.5" y1="365" x2="97.5" y2="368" stroke="rgba(222,79,79,0.45)" stroke-width="1"/>
<line x1="97.5" y1="15" x2="97.5" y2="365" stroke="rgba(222,79,79,0.45)" stroke-width="1" stroke-dasharray="1 1"/>
<line x1="97.5" y1="13" x2="97.5" y2="15" stroke="rgba(222,79,79,0.45)" stroke-width="1"/>
<line x1="112.5" y1="365" x2="112.5" y2="368" stroke="rgba(122,122,122,0.36)" stroke-width="1"/>
<line x1="112.5" y1="15" x2="112.5" y2="365" stroke="rgba(122,122,122,0.36)" stroke-width="1" stroke-dasharray="1 1"/>
<line x1="112.5" y1="13" x2="112.5" y2="15" stroke="rgba(122,122,122,0.36)" stroke-width="1"/>
<line x1="126.5" y1="365" x2="126.5" y2="368" stroke="rgba(222,79,79,0.45)" stroke-width="1"/>
<line x1="126.5" y1="15" x2="126.5" y2="365" stroke="rgba(222,79,79,0.45)" stroke-width="1" stroke-dasharray="1 1"/>
<line x1="126.5" y1="13" x2="126.5" y2="15" stroke="rgba(222,79,79,0.45)" stroke-width="1"/>
<line x1="141.5" y1="365" x2="141.5" y2="368" stroke="rgba(122,122,122,0.36)" stroke-width="1"/>
<line x1="141.5" y1="15" x2="141.5" y2="365" stroke="rgba(122,122,122,0.36)" stroke-width="1" stroke-dasharray="1 1"/>
<line x1="141.5" y1="13" x2="141.5" y2="15" stroke="rgba(122,122,122,0.36)" stroke-width="1"/>
<line x1="156.5" y1="365" x2="156.5" y2="368" stroke="rgba(222,79,79,0.45)" stroke-width="1"/>
<line x1="156.5" y1="15" x2="156.5" y2="365" stroke="rgba(222,79,79,0.45)" stroke-width="1" stroke-dasharray="1 1"/>
<line x1="156.5" y1="13" x2="156.5" y2="15" stroke="rgba(222,79,79,0.45)" stroke-width="1"/>
<line x1="170.5" y1="365" x2="170.5" y2="368" stroke="rgba(122,122,122,0.36)" stroke-width="1"/>
<line x1="170.5" y1="15" x2="170.5" y2="365" stroke="rgba(122,122,122,0.36)" stroke-width="1" stroke-dasharray="1 1"/>
<line x1="170.5" y1="13" x2="170.5" y2="15" stroke="rgba(122,122,122,0.36)" stroke-width="1"/>
<line x1="185.5" y1="365" x2="185.5" y2="368" stroke="rgba(222,79,79,0.45)" stroke-width="1"/>
<line x1="185.5" y1="15" x2="185.5" y2="365" stroke="rgba(222,79,79,0.45)" stroke-width="1" stroke-dasharray="1 1"/>
<line x1="185.5" y1="13" x2="185.5" y2="15" stroke="rgba(222,79,79,0.45)" stroke-width="1"/>
<line x1="199.5" y1="365" x2="199.5" y2="368" stroke="rgba(122,122,122,0.36)" stroke-width="1"/>
<line x1="199.5" y1="15" x2="199.5" y2="365" stroke="rgba(122,122,122,0.36)" stroke-width="1" stroke-dasharray="1 1"/>
<line x1="199.5" y1="13" x2="199.5" y2="15" stroke="rgba(122,122,122,0.36)" stroke-width="1"/>
<line x1="214.5" y1="365" x2="214.5" y2="368" stroke="rgba(222,79,79,0.45)" stroke-width="1"/>
<line x1="214.5" y1="15" x2="214.5" y2="365" stroke="rgba(222,79,79,0.45)" stroke-width="1" stroke-dasharray="1 1"/>
<line x1="214.5" y1="13" x2="214.5" y2="15" stroke="rgba(222,79,79,0.45)" stroke-width="1"/>
<line x1="228.5" y1="365" x2="228.5" y2="368" stroke="rgba(122,122,122,0.36)" stroke-width="1"/>
<line x1="228.5" y1="15" x2="228.5" y2="365" stroke="rgba(122,122,122,0.36)" stroke-width="1" stroke-dasharray="1 1"/>
<line x1="228.5" y1="13" x2="228.5" y2="15" stroke="rgba(122,122,122,0.36)" stroke-width="1"/>
<line x1="243.5" y1="365" x2="243.5" y2="368" stroke="rgba(222,79,79,0.45)" stroke-width="1"/>
<line x1="243.5" y1="15" x2="243.5" y2="365" stroke="rgba(222,79,79,0.45)" stroke-width="1" stroke-dasharray="1 1"/>
<line x1="243.5" y1="13" x2="243.5" y2="15" stroke="rgba(222,79,79,0.45)" stroke-width="1"/>
<line x1="258.5" y1="365" x2="258.5" y2="368" stroke="rgba(122,122,122,0.36)" stroke-width="1"/>
<line x1="258.5" y1="15" x2="258.5" y2="365" stroke="rgba(122,122,122,0.36)" stroke-width="1" stroke-dasharray="1 1"/>
<line x1="258.5" y1="13" x2="258.5" y2="15" stroke="rgba(122,122,122,0.36)" stroke-width="1"/>
<line x1="272.5" y1="365" x2="272.5" y2="368" stroke="rgba(222,79,79,0.45)" stroke-width="1"/>
<line x1="272.5" y1="15" x2="272.5" y2="365" stroke="rgba(222,79,79,0.45)" stroke-width="1" stroke-dasharray="1 1"/>
<line x1="272.5" y1="13" x2="272.5" y2="15" stroke="rgba(222,79,79,0.45)" stroke-width="1"/>
<line x1="287.5" y1="365" x2="287.5" y2="368" stroke="rgba(122,122,122,0.36)" stroke-width="1"/>
<line x1="287.5" y1="15" x2="287.5" y2="365" stroke="rgba(122,122,122,0.36)" stroke-width="1" stroke-dasharray="1 1"/>
<line x1="287.5" y1="13" x2="287.5" y2="15" stroke="rgba(122,122,122,0.36)" stroke-width="1"/>
<line x1="301.5" y1="365" x2="301.5" y2="368" stroke="rgba(222,79,79,0.45)" stroke-width="1"/>
<line x1="301.5" y1="15" x2="301.5" y2="365" stroke="rgba(222,79,79,0.45)" stroke-width="1" stroke-dasharray="1 1"/>
<line x1="301.5" y1="13" x2="301.5" y2="15" stroke="rgba(222,79,79,0.45)" stroke-width="1"/>
<line x1="316.5" y1="365" x2="316.5" y2="368" stroke="rgba(122,122,122,0.36)" stroke-width="1"/>
<line x1="316.5" y1="15" x2="316.5" y2="365" stroke="rgba(122,122,122,0.36)" stroke-width="1" stroke-dasharray="1 1"/>
<line x1="316.5" y1="13" x2="316.5" y2="15" stroke="rgba(122,122,122,0.36)" stroke-width="1"/>
<line x1="331.5" y1="365" x2="331.5" y2="368" stroke="rgba(222,79,79,0.45)" stroke-width="1"/>
<line x1="331.5" y1="15" x2="331.5" y2="365" stroke="rgba(222,79,79,0.45)" stroke-width="1" stroke-dasharray="1 1"/>
<line x1="331.5" y1="13" x2="331.5" y2="15" stroke="rgba(222,79,79,0.45)" stroke-width="1"/>
<line x1="345.5" y1="365" x2="345.5" y2="368" stroke="rgba(122,122,122,0.36)" stroke-width="1"/>
<line x1="345.5" y1="15" x2="345.5" y2="365" stroke="rgba(122,122,122,0.36)" stroke-width="1" stroke-dasharray="1 1"/>
<line x1="345.5" y1="13" x2="345.5" y2="15" stroke="rgba(122,122,122,0.36)" stroke-width="1"/>
<line x1="360.5" y1="365" x2="360.5" y2="368" stroke="rgba(222,79,79,0.45)" stroke-width="1"/>
<line x1="360.5" y1="15" x2="360.5" y2="365" stroke="rgba(222,79,79,0.45)" stroke-width="1" stroke-dasharray="1 1"/>
<line x1="360.5" y1="13" x2="360.5" y2="15" stroke="rgba(222,79,79,0.45)" stroke-width="1"/>
<line x1="374.5" y1="365" x2="374.5" y2="368" stroke="rgba(122,122,122,0.36)" stroke-width="1"/>
<line x1="374.5" y1="15" x2="374.5" y2="365" stroke="rgba(122,122,122,0.36)" stroke-width="1" stroke-dasharray="1 1"/>
<line x1="374.5" y1="13" x2="374.5" y2="15" stroke="rgba(122,122,122,0.36)" stroke-width="1"/>
<line x1="389.5" y1="365" x2="389.5" y2="368" stroke="rgba(222,79,79,0.45)" stroke-width="1"/>
<line x1="389.5" y1="15" x2="389.5" y2="365" stroke="rgba(222,79,79,0.45)" stroke-width="1" stroke-dasharray="1 1"/>
<line x1="389.5" y1="13" x2="389.5" y2="15" stroke="rgba(222,79,79,0.45)" stroke-width="1"/>
<line x1="403.5" y1="365" x2="403.5" y2="368" stroke="rgba(122,122,122,0.36)" stroke-width="1"/>
<line x1="403.5" y1="15" x2="403.5" y2="365" stroke="rgba(122,122,122,0.36)" stroke-width="1" stroke-dasharray="1 1"/>
<line x1="403.5" y1="13" x2="403.5" y2="15" stroke="rgba(122,122,122,0.36)" stroke-width="1"/>
<line x1="418.5" y1="365" x2="418.5" y2="368" stroke="rgba(222,79,79,0.45)" stroke-width="1"/>
<line x1="418.5" y1="15" x2="418.5" y2="365" stroke="rgba(222,79,79,0.45)" stroke-width="1" stroke-dasharray="1 1"/>
<line x1="418.5" y1="13" x2="418.5" y2="15" stroke="rgba(222,79,79,0.45)" stroke-width="1"/>
<line x1="433.5" y1="365" x2="433.5" y2="368" stroke="rgba(122,122,122,0.36)" stroke-width="1"/>
<line x1="433.5" y1="15" x2="433.5" y2="365" stroke="rgba(122,122,122,0.36)" stroke-width="1" stroke-dasharray="1 1"/>
<line x1="433.5" y1="13" x2="433.5" y2="15" stroke="rgba(122,122,122,0.36)" stroke-width="1"/>
<line x1="447.5" y1="365" x2="447.5" y2="368" stroke="rgba(222,79,79,0.45)" stroke-width="1"/>
<line x1="447.5" y1="15" x2="447.5" y2="365" stroke="rgba(222,79,79,0.45)" stroke-width="1" stroke-dasharray="1 1"/>
<line x1="447.5" y1="13" x2="447.5" y2="15" stroke="rgba(222,79,79,0.45)" stroke-width="1"/>
<line x1="462.5" y1="365" x2="462.5" y2="368" stroke="rgba(122,122,122,0.36)" stroke-width="1"/>
<line x1="462.5" y1="15" x2="462.5" y2="365" stroke="rgba(122,122,122,0.36)" stroke-width="1" stroke-dasharray="1 1"/>
<line x1="462.5" y1="13" x2="462.5" y2="15" stroke="rgba(122,122,122,0.36)" stroke-width="1"/>
<line x1="476.5" y1="365" x2="476.5" y2="368" stroke="rgba(222,79,79,0.45)" stroke-width="1"/>
<line x1="476.5" y1="15" x2="476.5" y2="365" stroke="rgba(222,79,79,0.45)" stroke-width="1" stroke-dasharray="1 1"/>
<line x1="476.5" y1="13" x2="476.5" y2="15" stroke="rgba(222,79,79,0.45)" stroke-width="1"/>
<line x1="491.5" y1="365" x2="491.5" y2="368" stroke="rgba(122,122,122,0.36)" stroke-width="1"/>
<line x1="491.5" y1="15" x2="491.5" y2="365" stroke="rgba(122,122,122,0.36)" stroke-width="1" stroke-dasharray="1 1"/>
<line x1="491.5" y1="13" x2="491.5" y2="15" stroke="rgba(122,122,122,0.36)" stroke-width="1"/>
<line x1="506.5" y1="365" x2="506.5" y2="368" stroke="rgba(222,79,79,0.45)" stroke-width="1"/>
<line x1="506.5" y1="15" x2="506.5" y2="365" stroke="rgba(222,79,79,0.45)" stroke-width="1" stroke-dasharray="1 1"/>
<line x1="506.5" y1="13" x2="506.5" y2="15" stroke="rgba(222,79,79,0.45)" stroke-width="1"/>
<line x1="520.5" y1="365" x2="520.5" y2="368" stroke="rgba(122,122,122,0.36)" stroke-width="1"/>
<line x1="520.5" y1="15" x2="520.5" y2="365" stroke="rgba(122,122,122,0.36)" stroke-width="1" stroke-dasharray="1 1"/>
<line x1="520.5" y1="13" x2="520.5" y2="15" stroke="rgba(122,122,122,0.36)" stroke-width="1"/>
<line x1="535.5" y1="365" x2="535.5" y2="368" stroke="rgba(222,79,79,0.45)" stroke-width="1"/>
<line x1="535.5" y1="15" x2="535.5" y2="365" stroke="rgba(222,79,79,0.45)" stroke-width="1" stroke-dasharray="1 1"/>
<line x1="535.5" y1="13" x2="535.5" y2="15" stroke="rgba(222,79,79,0.45)" stroke-width="1"/>
<line x1="549.5" y1="365" x2="549.5" y2="368" stroke="rgba(122,122,122,0.36)" stroke-width="1"/>
<line x1="549.5" y1="15" x2="549.5" y2="365" stroke="rgba(122,122,122,0.36)" stroke-width="1" stroke-dasharray="1 1"/>
<line x1="549.5" y1="13" x2="549.5" y2="15" stroke="rgba(122,122,122,0.36)" stroke-width="1"/>
<line x1="564.5" y1="365" x2="564.5" y2="368" stroke="rgba(222,79,79,0.45)" stroke-width="1"/>
<line x1="564.5" y1="15" x2="564.5" y2="365" stroke="rgba(222,79,79,0.45)" stroke-width="1" stroke-dasharray="1 1"/>
<line x1="564.5" y1="13" x2="564.5" y2="15" stroke="rgba(222,79,79,0.45)" stroke-width="1"/>
<line x1="578.5" y1="365" x2="578.5" y2="368" stroke="rgba(122,122,122,0.36)" stroke-width="1"/>
<line x1="578.5" y1="15" x2="578.5" y2="365" stroke="rgba(122,122,122,0.36)" stroke-width="1" stroke-dasharray="1 1"/>
<line x1="578.5" y1="13" x2="578.5" y2="15" stroke="rgba(122,122,122,0.36)" stroke-width="1"/>
<line x1="593.5" y1="365" x2="593.5" y2="368" stroke="rgba(222,79,79,0.45)" stroke-width="1"/>
<line x1="593.5" y1="15" x2="593.5" y2="365" stroke="rgba(222,79,79,0.45)" stroke-width="1" stroke-dasharray="1 1"/>
<line x1="593.5" y1="13" x2="593.5" y2="15" stroke="rgba(222,79,79,0.45)" stroke-width="1"/>
<line x1="608.5" y1="365" x2="608.5" y2="368" stroke="rgba(122,122,122,0.36)" stroke-width="1"/>
<line x1="608.5" y1="15" x2="608.5" y2="365" stroke="rgba(122,122,122,0.36)" stroke-width="1" stroke-dasharray="1 1"/>
<line x1="608.5" y1="13" x2="608.5" y2="15" stroke="rgba(122,122,122,0.36)" stroke-width="1"/>
<line x1="622.5" y1="365" x2="622.5" y2="368" stroke="rgba(222,79,79,0.45)" stroke-width="1"/>
<line x1="622.5" y1="15" x2="622.5" y2="365" stroke="rgba(222,79,79,0.45)" stroke-width="1" stroke-dasharray="1 1"/>
<line x1="622.5" y1="13" x2="622.5" y2="15" stroke="rgba(222,79,79,0.45)" stroke-width="1"/>
<line x1="637.5" y1="365" x2="637.5" y2="368" stroke="rgba(122,122,122,0.36)" stroke-width="1"/>
<line x1="637.5" y1="15" x2="637.5" y2="365" stroke="rgba(122,122,122,0.36)" stroke-width="1" stroke-dasharray="1 1"/>
<line x1="637.5" y1="13" x2="637.5" y2="15" stroke="rgba(122,122,122,0.36)" stroke-width="1"/>
<line x1="651.5" y1="365" x2="651.5" y2="368" stroke="rgba(222,79,79,0.45)" stroke-width="1"/>
<line x1="651.5" y1="15" x2="651.5" y2="365" stroke="rgba(222,79,79,0.45)" stroke-width="1" stroke-dasharray="1 1"/>
<line x1="651.5" y1="13" x2="651.5" y2="15" stroke="rgba(222,79,79,0.45)" stroke-width="1"/>
<line x1="666.5" y1="365" x2="666.5" y2="368" stroke="rgba(122,122,122,0.36)" stroke-width="1"/>
<line x1="666.5" y1="15" x2="666.5" y2="365" stroke="rgba(122,122,122,0.36)" stroke-width="1" stroke-dasharray="1 1"/>
<line x1="666.5" y1="13" x2="666.5" y2="15" stroke="rgba(122,122,122,0.36)" stroke-width="1"/>
<line x1="681.5" y1="365" x2="681.5" y2="368" stroke="rgba(222,79,79,0.45)" stroke-width="1"/>
<line x1="681.5" y1="15" x2="681.5" y2="365" stroke="rgba(222,79,79,0.45)" stroke-width="1" stroke-dasharray="1 1"/>
<line x1="681.5" y1="13" x2="681.5" y2="15" stroke="rgba(222,79,79,0.45)" stroke-width="1"/>
<line x1="695.5" y1="365" x2="695.5" y2="368" stroke="rgba(122,122,122,0.36)" stroke-width="1"/>
<line x1="695.5" y1="15" x2="695.5" y2="365" stroke="rgba(122,122,122,0.36)" stroke-width="1" stroke-dasharray="1 1"/>
<line x1="695.5" y1="13" x2="695.5" y2="15" stroke="rgba(122,122,122,0.36)" stroke-width="1"/>
<line x1="710.5" y1="365" x2="710.5" y2="368" stroke="rgba(222,79,79,0.45)" stroke-width="1"/>
<line x1="710.5" y1="15" x2="710.5" y2="365" stroke="rgba(222,79,79,0.45)" stroke-width="1" stroke-dasharray="1 1"/>
<line x1="710.5" y1="13" x2="710.5" y2="15" stroke="rgba(222,79,79,0.45)" stroke-width="1"/>
<line x1="724.5" y1="365" x2="724.5" y2="368" stroke="rgba(122,122,122,0.36)" stroke-width="1"/>
<line x1="724.5" y1="15" x2="724.5" y2="365" stroke="rgba(122,122,122,0.36)" stroke-width="1" stroke-dasharray="1 1"/>
<line x1="724.5" y1="13" x2="724.5" y2="15" stroke="rgba(122,122,122,0.36)" stroke-width="1"/>
<line x1="739.5" y1="365" x2="739.5" y2="368" stroke="rgba(222,79,79,0.45)" stroke-width="1"/>
<line x1="739.5" y1="15" x2="739.5" y2="365" stroke="rgba(222,79,79,0.45)" stroke-width="1" stroke-dasharray="1 1"/>
<line x1="739.5" y1="13" x2="739.5" y2="15" stroke="rgba(222,79,79,0.45)" stroke-width="1"/>
<line x1="753.5" y1="365" x2="753.5" y2="368" stroke="rgba(122,122,122,0.36)" stroke-width="1"/>
<line x1="753.5" y1="15" x2="753.5" y2="365" stroke="rgba(122,122,122,0.36)" stroke-width="1" stroke-dasharray="1 1"/>
<line x1="753.5" y1="13" x2="753.5" y2="15" stroke="rgba(122,122,122,0.36)" stroke-width="1"/>
<line x1="63" y1="365.5" x2="770" y2="365.5" stroke="#1f1f1f" stroke-width="1"/>
<line x1="66.5" y1="369" x2="66.5" y2="13" stroke="#4f4f4f" stroke-width="1"/>
<polygon points="64,13 70,13 67,8" fill="#7f1f1f"/>
<polygon points="769,362 769,368 774,365" fill="#7f1f1f"/>
<text x="60.5" y="368.6" font-size="10.3" text-anchor="end" fill="#000">0</text>
<text x="60.5" y="321.9" font-size="10.3" text-anchor="end" fill="#000">10</text>
<text x="60.5" y="275.3" font-size="10.3" text-anchor="end" fill="#000">20</text>
<text x="60.5" y="228.6" font-size="10.3" text-anchor="end" fill="#000">30</text>
<text x="60.5" y="181.9" font-size="10.3" text-anchor="end" fill="#000">40</text>
<text x="60.5" y="135.3" font-size="10.3" text-anchor="end" fill="#000">50</text>
<text x="60.5" y="88.6" font-size="10.3" text-anchor="end" fill="#000">60</text>
<text x="60.5" y="41.9" font-size="10.3" text-anchor="end" fill="#000">70</text>
<text x="98.2" y="377" font-size="10.1" text-anchor="middle" fill="#000">Do 09:00</text>
<text x="185.7" y="377" font-size="10.1" text-anchor="middle" fill="#000">Do 12:00</text>
<text x="273.2" y="377" font-size="10.1" text-anchor="middle" fill="#000">Do 15:00</text>
<text x="360.7" y="377" font-size="10.1" text-anchor="middle" fill="#000">Do 18:00</text>
<text x="448.2" y="377" font-size="10.1" text-anchor="middle" fill="#000">Do 21:00</text>
<text x="535.7" y="377" font-size="10.1" text-anchor="middle" fill="#000">Fr 00:00</text>
<text x="623.2" y="377" font-size="10.1" text-anchor="middle" fill="#000">Fr 03:00</text>
<text x="710.7" y="377" font-size="10.1" text-anchor="middle" fill="#000">Fr 06:00</text>
<text transform="translate(13.9,190) rotate(-90)" font-size="11.7" text-anchor="middle" fill="#000">Temperatur (°C)</text>
<text transform="translate(785.6,5.9) rotate(90)" font-size="8.2" fill="#8a8a8a" style="stroke:#8a8a8a">RRDTOOL / TOBI OETIKER</text>
<rect x="15.5" y="386.5" width="8" height="9" fill="#009b9b" stroke="#000" stroke-width="1"/>
<text x="30.3" y="395" font-size="11.67" fill="#000" xml:space="preserve">Speicher  0</text>
<text x="137.3" y="395" font-size="11.67" fill="#000">min:</text>
<text x="235.5" y="395" font-size="11.67" text-anchor="end" fill="#000">21.75</text>
<text x="256" y="395" font-size="11.67" fill="#000">max:</text>
<text x="354.7" y="395" font-size="11.67" text-anchor="end" fill="#000">23.19</text>
<text x="374" y="395" font-size="11.67" fill="#000">last:</text>
<text x="481" y="395" font-size="11.67" text-anchor="end" fill="#000">21.88</text>
<rect x="15.5" y="400.5" width="8" height="9" fill="#00009b" stroke="#000" stroke-width="1"/>
<text x="30.3" y="409" font-size="11.67" fill="#000" xml:space="preserve">Speicher  1</text>
<text x="137.3" y="409" font-size="11.67" fill="#000">min:</text>
<text x="235.5" y="409" font-size="11.67" text-anchor="end" fill="#000">22.75</text>
<text x="256" y="409" font-size="11.67" fill="#000">max:</text>
<text x="354.7" y="409" font-size="11.67" text-anchor="end" fill="#000">24.19</text>
<text x="374" y="409" font-size="11.67" fill="#000">last:</text>
<text x="481" y="409" font-size="11.67" text-anchor="end" fill="#000">23.10</text>
<rect x="15.5" y="414.5" width="8" height="9" fill="#009b00" stroke="#000" stroke-width="1"/>
<text x="30.3" y="423" font-size="11.67" fill="#000" xml:space="preserve">Speicher  2</text>
<text x="137.3" y="423" font-size="11.67" fill="#000">min:</text>
<text x="235.5" y="423" font-size="11.67" text-anchor="end" fill="#000">22.75</text>
<text x="256" y="423" font-size="11.67" fill="#000">max:</text>
<text x="354.7" y="423" font-size="11.67" text-anchor="end" fill="#000">26.19</text>
<text x="374" y="423" font-size="11.67" fill="#000">last:</text>
<text x="481" y="423" font-size="11.67" text-anchor="end" fill="#000">23.94</text>
<rect x="15.5" y="428.5" width="8" height="9" fill="#9b0000" stroke="#000" stroke-width="1"/>
<text x="30.3" y="437" font-size="11.67" fill="#000" xml:space="preserve">Speicher  3</text>
<text x="137.3" y="437" font-size="11.67" fill="#000">min:</text>
<text x="235.5" y="437" font-size="11.67" text-anchor="end" fill="#000">22.75</text>
<text x="256" y="437" font-size="11.67" fill="#000">max:</text>
<text x="354.7" y="437" font-size="11.67" text-anchor="end" fill="#000">28.17</text>
<text x="374" y="437" font-size="11.67" fill="#000">last:</text>
<text x="481" y="437" font-size="11.67" text-anchor="end" fill="#000">24.04</text>
<rect x="15.5" y="442.5" width="8" height="9" fill="#000000" stroke="#000" stroke-width="1"/>
<text x="30.3" y="451" font-size="11.67" fill="#000" xml:space="preserve">Speicher  4</text>
<text x="137.3" y="451" font-size="11.67" fill="#000">min:</text>
<text x="235.5" y="451" font-size="11.67" text-anchor="end" fill="#000">23.75</text>
<text x="256" y="451" font-size="11.67" fill="#000">max:</text>
<text x="354.7" y="451" font-size="11.67" text-anchor="end" fill="#000">38.14</text>
<text x="374" y="451" font-size="11.67" fill="#000">last:</text>
<text x="481" y="451" font-size="11.67" text-anchor="end" fill="#000">26.92</text>
<rect x="15.5" y="456.5" width="8" height="9" fill="#ffff00" stroke="#000" stroke-width="1"/>
<text x="30.3" y="465" font-size="11.67" fill="#000" xml:space="preserve">Speicher  5</text>
<text x="137.3" y="465" font-size="11.67" fill="#000">min:</text>
<text x="235.5" y="465" font-size="11.67" text-anchor="end" fill="#000">25.79</text>
<text x="256" y="465" font-size="11.67" fill="#000">max:</text>
<text x="354.7" y="465" font-size="11.67" text-anchor="end" fill="#000">54.35</text>
<text x="374" y="465" font-size="11.67" fill="#000">last:</text>
<text x="481" y="465" font-size="11.67" text-anchor="end" fill="#000">34.07</text>
<rect x="15.5" y="470.5" width="8" height="9" fill="#ff00ff" stroke="#000" stroke-width="1"/>
<text x="30.3" y="479" font-size="11.67" fill="#000" xml:space="preserve">Speicher  6</text>
<text x="137.3" y="479" font-size="11.67" fill="#000">min:</text>
<text x="235.5" y="479" font-size="11.67" text-anchor="end" fill="#000">29.81</text>
<text x="256" y="479" font-size="11.67" fill="#000">max:</text>
<text x="354.7" y="479" font-size="11.67" text-anchor="end" fill="#000">65.14</text>
<text x="374" y="479" font-size="11.67" fill="#000">last:</text>
<text x="481" y="479" font-size="11.67" text-anchor="end" fill="#000">45.57</text>
<rect x="15.5" y="484.5" width="8" height="9" fill="#00ffff" stroke="#000" stroke-width="1"/>
<text x="30.3" y="493" font-size="11.67" fill="#000" xml:space="preserve">Speicher  7</text>
<text x="137.3" y="493" font-size="11.67" fill="#000">min:</text>
<text x="235.5" y="493" font-size="11.67" text-anchor="end" fill="#000">37.12</text>
<text x="256" y="493" font-size="11.67" fill="#000">max:</text>
<text x="354.7" y="493" font-size="11.67" text-anchor="end" fill="#000">68.49</text>
<text x="374" y="493" font-size="11.67" fill="#000">last:</text>
<text x="481" y="493" font-size="11.67" text-anchor="end" fill="#000">54.88</text>
<rect x="15.5" y="498.5" width="8" height="9" fill="#0000ff" stroke="#000" stroke-width="1"/>
<text x="30.3" y="507" font-size="11.67" fill="#000" xml:space="preserve">Speicher  8</text>
<text x="137.3" y="507" font-size="11.67" fill="#000">min:</text>
<text x="235.5" y="507" font-size="11.67" text-anchor="end" fill="#000">55.93</text>
<text x="256" y="507" font-size="11.67" fill="#000">max:</text>
<text x="354.7" y="507" font-size="11.67" text-anchor="end" fill="#000">70.02</text>
<text x="374" y="507" font-size="11.67" fill="#000">last:</text>
<text x="481" y="507" font-size="11.67" text-anchor="end" fill="#000">65.19</text>
<rect x="15.5" y="512.5" width="8" height="9" fill="#00ff00" stroke="#000" stroke-width="1"/>
<text x="30.3" y="521" font-size="11.67" fill="#000" xml:space="preserve">Speicher  9</text>
<text x="137.3" y="521" font-size="11.67" fill="#000">min:</text>
<text x="235.5" y="521" font-size="11.67" text-anchor="end" fill="#000">63.87</text>
<text x="256" y="521" font-size="11.67" fill="#000">max:</text>
<text x="354.7" y="521" font-size="11.67" text-anchor="end" fill="#000">69.94</text>
<text x="374" y="521" font-size="11.67" fill="#000">last:</text>
<text x="481" y="521" font-size="11.67" text-anchor="end" fill="#000">67.75</text>
<rect x="15.5" y="526.5" width="8" height="9" fill="#ff0000" stroke="#000" stroke-width="1"/>
<text x="30.3" y="535" font-size="11.67" fill="#000" xml:space="preserve">Speicher 10</text>
<text x="137.3" y="535" font-size="11.67" fill="#000">min:</text>
<text x="235.5" y="535" font-size="11.67" text-anchor="end" fill="#000">62.86</text>
<text x="256" y="535" font-size="11.67" fill="#000">max:</text>
<text x="354.7" y="535" font-size="11.67" text-anchor="end" fill="#000">67.36</text>
<text x="374" y="535" font-size="11.67" fill="#000">last:</text>
<text x="481" y="535" font-size="11.67" text-anchor="end" fill="#000">65.82</text>
</svg></body></html>
